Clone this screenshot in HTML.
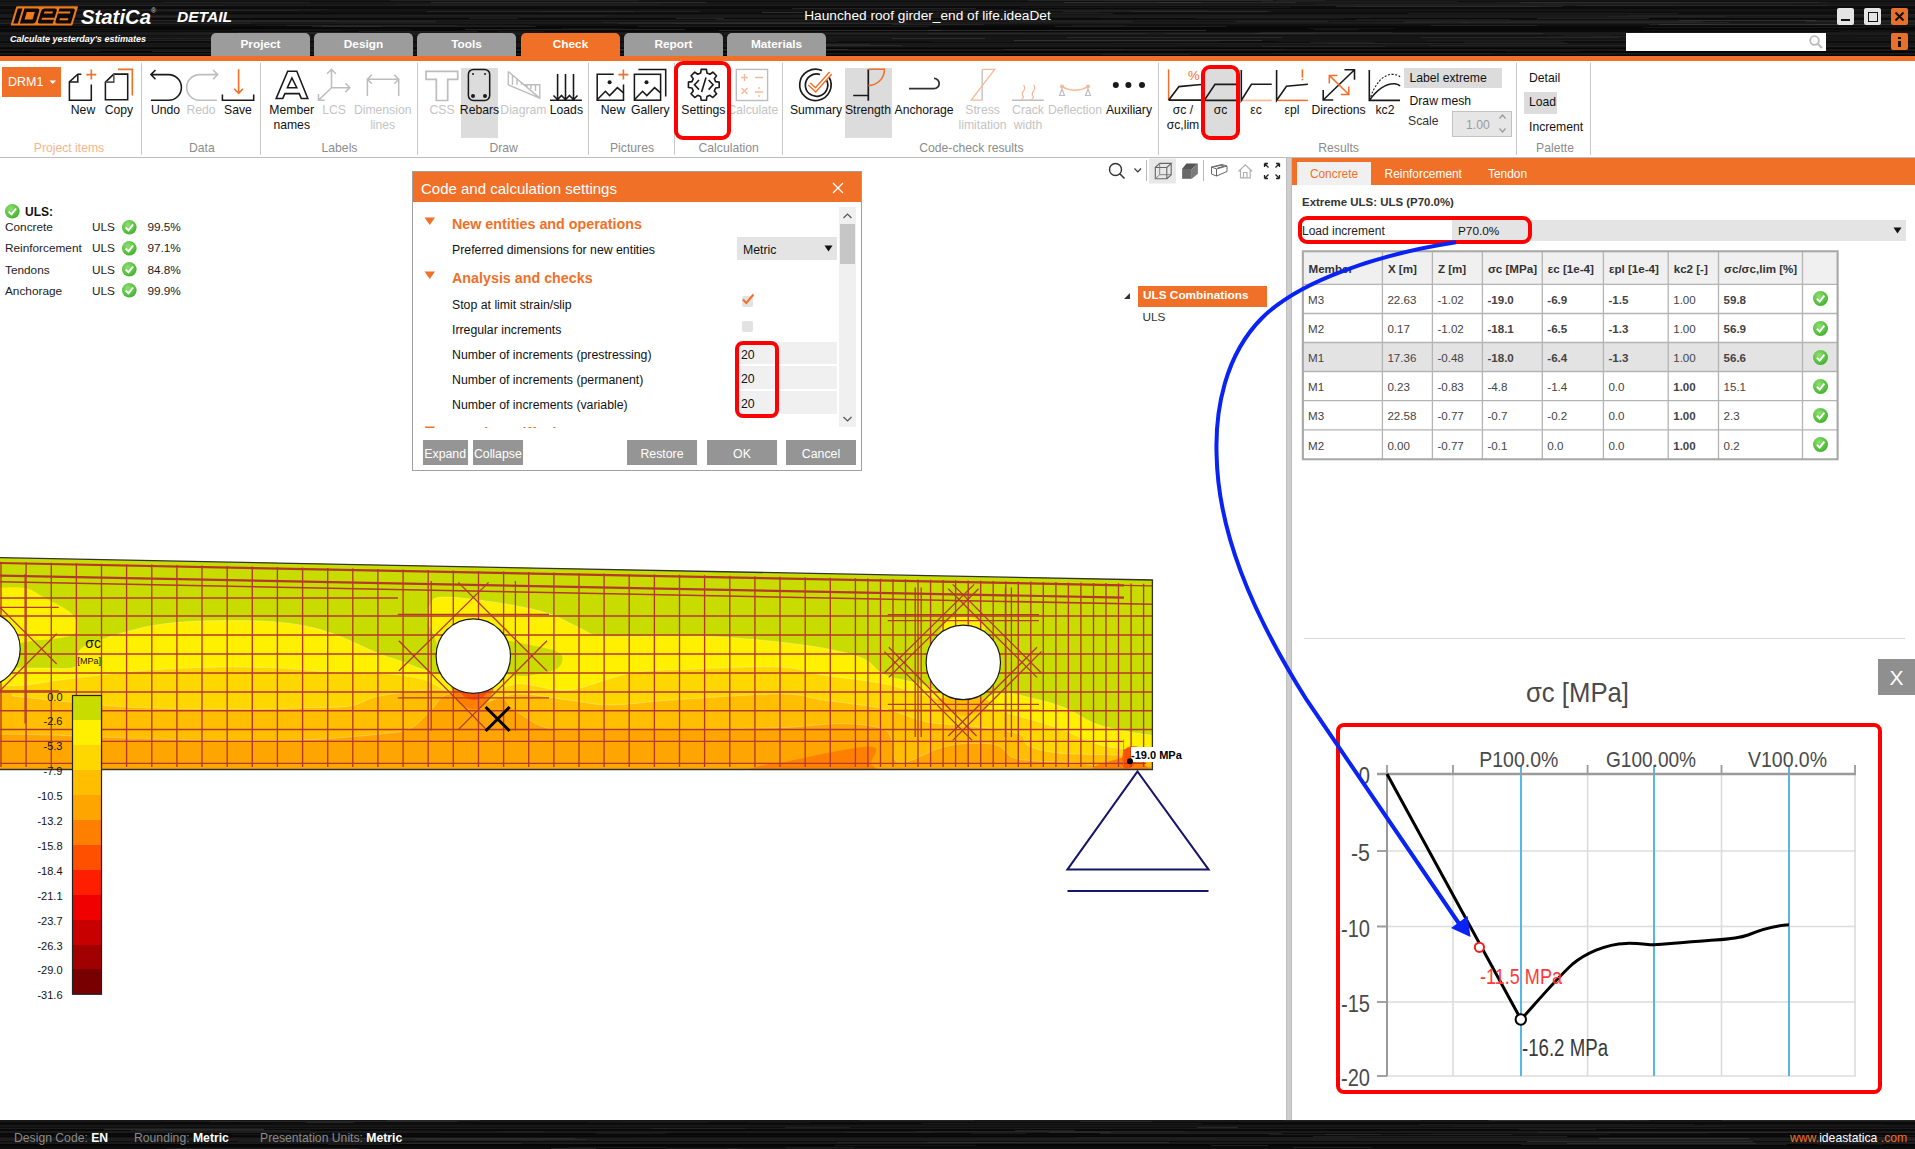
<!DOCTYPE html>
<html><head><meta charset="utf-8"><style>
*{box-sizing:border-box}
html,body{margin:0;padding:0;width:1915px;height:1149px;overflow:hidden;background:#fff;font-family:"Liberation Sans", sans-serif;}
.a{position:absolute}
.t{position:absolute;white-space:nowrap;line-height:1}
</style></head><body>
<div class="a" style="left:0;top:0;width:1915px;height:56px;overflow:hidden"><svg width="1915" height="56" style="position:absolute;left:0;top:0"><rect width="1915" height="56" fill="#0a0a0a"/><rect x="0" y="0" width="1915" height="1" fill="rgb(22,22,22)"/><rect x="0" y="1" width="1915" height="1" fill="rgb(15,15,15)"/><rect x="0" y="2" width="1915" height="2" fill="rgb(24,24,24)"/><rect x="0" y="4" width="1915" height="1" fill="rgb(23,23,23)"/><rect x="0" y="5" width="1915" height="1" fill="rgb(30,30,30)"/><rect x="0" y="6" width="1915" height="2" fill="rgb(12,12,12)"/><rect x="0" y="8" width="1915" height="1" fill="rgb(10,10,10)"/><rect x="0" y="9" width="1915" height="2" fill="rgb(21,21,21)"/><rect x="0" y="11" width="1915" height="2" fill="rgb(16,16,16)"/><rect x="0" y="13" width="1915" height="1" fill="rgb(11,11,11)"/><rect x="0" y="14" width="1915" height="1" fill="rgb(20,20,20)"/><rect x="0" y="15" width="1915" height="2" fill="rgb(27,27,27)"/><rect x="0" y="17" width="1915" height="1" fill="rgb(25,25,25)"/><rect x="0" y="18" width="1915" height="1" fill="rgb(9,9,9)"/><rect x="0" y="19" width="1915" height="1" fill="rgb(13,13,13)"/><rect x="0" y="20" width="1915" height="1" fill="rgb(30,30,30)"/><rect x="0" y="21" width="1915" height="1" fill="rgb(19,19,19)"/><rect x="0" y="22" width="1915" height="2" fill="rgb(26,26,26)"/><rect x="0" y="24" width="1915" height="2" fill="rgb(16,16,16)"/><rect x="0" y="26" width="1915" height="2" fill="rgb(8,8,8)"/><rect x="0" y="28" width="1915" height="1" fill="rgb(7,7,7)"/><rect x="0" y="29" width="1915" height="1" fill="rgb(8,8,8)"/><rect x="0" y="30" width="1915" height="2" fill="rgb(10,10,10)"/><rect x="0" y="32" width="1915" height="1" fill="rgb(25,25,25)"/><rect x="0" y="33" width="1915" height="2" fill="rgb(28,28,28)"/><rect x="0" y="35" width="1915" height="1" fill="rgb(17,17,17)"/><rect x="0" y="36" width="1915" height="2" fill="rgb(22,22,22)"/><rect x="0" y="38" width="1915" height="1" fill="rgb(21,21,21)"/><rect x="0" y="39" width="1915" height="2" fill="rgb(22,22,22)"/><rect x="0" y="41" width="1915" height="1" fill="rgb(14,14,14)"/><rect x="0" y="42" width="1915" height="1" fill="rgb(12,12,12)"/><rect x="0" y="43" width="1915" height="1" fill="rgb(26,26,26)"/><rect x="0" y="44" width="1915" height="1" fill="rgb(21,21,21)"/><rect x="0" y="45" width="1915" height="1" fill="rgb(26,26,26)"/><rect x="0" y="46" width="1915" height="1" fill="rgb(24,24,24)"/><rect x="0" y="47" width="1915" height="1" fill="rgb(13,13,13)"/><rect x="0" y="48" width="1915" height="1" fill="rgb(6,6,6)"/><rect x="0" y="49" width="1915" height="2" fill="rgb(24,24,24)"/><rect x="0" y="51" width="1915" height="2" fill="rgb(6,6,6)"/><rect x="0" y="53" width="1915" height="1" fill="rgb(29,29,29)"/><rect x="0" y="54" width="1915" height="1" fill="rgb(17,17,17)"/><rect x="0" y="55" width="1915" height="1" fill="rgb(4,4,4)"/><rect x="527" y="49" width="148" height="1" fill="rgb(37,37,37)" opacity="0.27"/><rect x="1158" y="2" width="138" height="1" fill="rgb(67,67,67)" opacity="0.37"/><rect x="1681" y="17" width="171" height="1" fill="rgb(32,32,32)" opacity="0.36"/><rect x="101" y="38" width="179" height="1" fill="rgb(42,42,42)" opacity="0.59"/><rect x="523" y="16" width="81" height="1" fill="rgb(32,32,32)" opacity="0.59"/><rect x="618" y="23" width="289" height="1" fill="rgb(54,54,54)" opacity="0.38"/><rect x="1659" y="24" width="207" height="1" fill="rgb(68,68,68)" opacity="0.49"/><rect x="152" y="51" width="172" height="1" fill="rgb(57,57,57)" opacity="0.47"/><rect x="1356" y="19" width="154" height="1" fill="rgb(46,46,46)" opacity="0.43"/><rect x="1028" y="0" width="245" height="1" fill="rgb(67,67,67)" opacity="0.36"/><rect x="690" y="37" width="204" height="1" fill="rgb(33,33,33)" opacity="0.47"/><rect x="603" y="22" width="217" height="1" fill="rgb(52,52,52)" opacity="0.46"/><rect x="498" y="31" width="46" height="1" fill="rgb(33,33,33)" opacity="0.58"/><rect x="-8" y="23" width="105" height="1" fill="rgb(59,59,59)" opacity="0.35"/><rect x="1132" y="11" width="135" height="1" fill="rgb(50,50,50)" opacity="0.52"/><rect x="1608" y="16" width="118" height="1" fill="rgb(54,54,54)" opacity="0.29"/><rect x="1548" y="36" width="218" height="1" fill="rgb(38,38,38)" opacity="0.36"/><rect x="387" y="51" width="110" height="1" fill="rgb(50,50,50)" opacity="0.32"/><rect x="805" y="44" width="65" height="1" fill="rgb(68,68,68)" opacity="0.36"/><rect x="606" y="53" width="98" height="1" fill="rgb(40,40,40)" opacity="0.28"/><rect x="1408" y="13" width="270" height="1" fill="rgb(58,58,58)" opacity="0.34"/><rect x="1496" y="2" width="178" height="1" fill="rgb(42,42,42)" opacity="0.36"/><rect x="1593" y="36" width="88" height="1" fill="rgb(47,47,47)" opacity="0.37"/><rect x="1577" y="5" width="250" height="1" fill="rgb(52,52,52)" opacity="0.46"/><rect x="778" y="33" width="246" height="1" fill="rgb(47,47,47)" opacity="0.41"/><rect x="1196" y="18" width="149" height="1" fill="rgb(56,56,56)" opacity="0.26"/><rect x="762" y="12" width="41" height="1" fill="rgb(69,69,69)" opacity="0.60"/><rect x="804" y="45" width="98" height="1" fill="rgb(59,59,59)" opacity="0.54"/><rect x="1253" y="33" width="290" height="1" fill="rgb(64,64,64)" opacity="0.37"/><rect x="397" y="4" width="263" height="1" fill="rgb(48,48,48)" opacity="0.29"/><rect x="431" y="2" width="275" height="1" fill="rgb(62,62,62)" opacity="0.57"/><rect x="1712" y="27" width="190" height="1" fill="rgb(30,30,30)" opacity="0.42"/><rect x="187" y="32" width="118" height="1" fill="rgb(31,31,31)" opacity="0.43"/><rect x="763" y="39" width="70" height="1" fill="rgb(38,38,38)" opacity="0.34"/><rect x="1643" y="30" width="251" height="1" fill="rgb(33,33,33)" opacity="0.37"/><rect x="338" y="34" width="271" height="1" fill="rgb(37,37,37)" opacity="0.31"/><rect x="1506" y="51" width="73" height="1" fill="rgb(30,30,30)" opacity="0.42"/><rect x="1072" y="25" width="53" height="1" fill="rgb(47,47,47)" opacity="0.34"/><rect x="1165" y="33" width="150" height="1" fill="rgb(60,60,60)" opacity="0.36"/><rect x="1560" y="54" width="54" height="1" fill="rgb(38,38,38)" opacity="0.27"/><rect x="48" y="30" width="293" height="1" fill="rgb(35,35,35)" opacity="0.43"/><rect x="913" y="10" width="122" height="1" fill="rgb(52,52,52)" opacity="0.39"/><rect x="716" y="19" width="134" height="1" fill="rgb(42,42,42)" opacity="0.60"/><rect x="792" y="8" width="184" height="1" fill="rgb(54,54,54)" opacity="0.53"/><rect x="1064" y="2" width="137" height="1" fill="rgb(68,68,68)" opacity="0.48"/><rect x="1014" y="40" width="248" height="1" fill="rgb(69,69,69)" opacity="0.56"/><rect x="54" y="40" width="169" height="1" fill="rgb(50,50,50)" opacity="0.40"/><rect x="1314" y="29" width="45" height="1" fill="rgb(43,43,43)" opacity="0.44"/><rect x="1316" y="4" width="249" height="1" fill="rgb(44,44,44)" opacity="0.40"/><rect x="1679" y="20" width="137" height="1" fill="rgb(65,65,65)" opacity="0.53"/><rect x="465" y="29" width="220" height="1" fill="rgb(63,63,63)" opacity="0.53"/><rect x="1262" y="46" width="123" height="1" fill="rgb(64,64,64)" opacity="0.29"/><rect x="1105" y="0" width="163" height="1" fill="rgb(45,45,45)" opacity="0.52"/><rect x="37" y="5" width="187" height="1" fill="rgb(54,54,54)" opacity="0.31"/><rect x="-4" y="53" width="262" height="1" fill="rgb(31,31,31)" opacity="0.55"/><rect x="1273" y="53" width="221" height="1" fill="rgb(48,48,48)" opacity="0.45"/><rect x="1520" y="2" width="299" height="1" fill="rgb(66,66,66)" opacity="0.43"/><rect x="1355" y="6" width="184" height="1" fill="rgb(36,36,36)" opacity="0.58"/><rect x="70" y="20" width="266" height="1" fill="rgb(41,41,41)" opacity="0.54"/><rect x="426" y="11" width="208" height="1" fill="rgb(59,59,59)" opacity="0.47"/><rect x="1431" y="25" width="106" height="1" fill="rgb(68,68,68)" opacity="0.39"/><rect x="638" y="26" width="291" height="1" fill="rgb(54,54,54)" opacity="0.43"/><rect x="1862" y="26" width="259" height="1" fill="rgb(40,40,40)" opacity="0.40"/><rect x="1067" y="37" width="215" height="1" fill="rgb(63,63,63)" opacity="0.49"/><rect x="257" y="25" width="273" height="1" fill="rgb(39,39,39)" opacity="0.31"/><rect x="928" y="30" width="278" height="1" fill="rgb(63,63,63)" opacity="0.58"/><rect x="1102" y="54" width="88" height="1" fill="rgb(47,47,47)" opacity="0.51"/><rect x="238" y="32" width="122" height="1" fill="rgb(44,44,44)" opacity="0.55"/><rect x="1007" y="49" width="117" height="1" fill="rgb(56,56,56)" opacity="0.46"/><rect x="1099" y="17" width="271" height="1" fill="rgb(49,49,49)" opacity="0.26"/><rect x="892" y="24" width="92" height="1" fill="rgb(66,66,66)" opacity="0.38"/><rect x="583" y="49" width="265" height="1" fill="rgb(56,56,56)" opacity="0.60"/><rect x="892" y="38" width="93" height="1" fill="rgb(67,67,67)" opacity="0.54"/><rect x="1564" y="35" width="47" height="1" fill="rgb(34,34,34)" opacity="0.55"/><rect x="737" y="46" width="269" height="1" fill="rgb(32,32,32)" opacity="0.41"/><rect x="401" y="15" width="209" height="1" fill="rgb(34,34,34)" opacity="0.59"/><rect x="1628" y="15" width="271" height="1" fill="rgb(46,46,46)" opacity="0.30"/><rect x="1172" y="43" width="263" height="1" fill="rgb(46,46,46)" opacity="0.31"/><rect x="38" y="11" width="150" height="1" fill="rgb(35,35,35)" opacity="0.29"/><rect x="469" y="18" width="49" height="1" fill="rgb(58,58,58)" opacity="0.45"/><rect x="1277" y="0" width="48" height="1" fill="rgb(51,51,51)" opacity="0.40"/><rect x="905" y="13" width="208" height="1" fill="rgb(61,61,61)" opacity="0.39"/><rect x="1020" y="7" width="270" height="1" fill="rgb(34,34,34)" opacity="0.48"/><rect x="171" y="33" width="276" height="1" fill="rgb(36,36,36)" opacity="0.43"/><rect x="1327" y="43" width="241" height="1" fill="rgb(58,58,58)" opacity="0.35"/><rect x="1278" y="41" width="285" height="1" fill="rgb(46,46,46)" opacity="0.29"/><rect x="1806" y="21" width="215" height="1" fill="rgb(64,64,64)" opacity="0.43"/><rect x="1260" y="32" width="132" height="1" fill="rgb(48,48,48)" opacity="0.49"/><rect x="1063" y="11" width="208" height="1" fill="rgb(70,70,70)" opacity="0.30"/><rect x="679" y="41" width="158" height="1" fill="rgb(36,36,36)" opacity="0.58"/><rect x="228" y="21" width="208" height="1" fill="rgb(68,68,68)" opacity="0.40"/><rect x="541" y="11" width="159" height="1" fill="rgb(49,49,49)" opacity="0.52"/><rect x="1336" y="6" width="226" height="1" fill="rgb(65,65,65)" opacity="0.44"/><rect x="1403" y="22" width="66" height="1" fill="rgb(47,47,47)" opacity="0.38"/><rect x="1665" y="2" width="164" height="1" fill="rgb(47,47,47)" opacity="0.34"/><rect x="1461" y="22" width="268" height="1" fill="rgb(55,55,55)" opacity="0.41"/><rect x="1540" y="4" width="132" height="1" fill="rgb(37,37,37)" opacity="0.30"/><rect x="1110" y="43" width="69" height="1" fill="rgb(37,37,37)" opacity="0.31"/><rect x="322" y="26" width="214" height="1" fill="rgb(55,55,55)" opacity="0.54"/><rect x="1421" y="37" width="198" height="1" fill="rgb(55,55,55)" opacity="0.53"/><rect x="1020" y="10" width="188" height="1" fill="rgb(42,42,42)" opacity="0.55"/><rect x="676" y="18" width="48" height="1" fill="rgb(58,58,58)" opacity="0.56"/><rect x="1815" y="24" width="122" height="1" fill="rgb(67,67,67)" opacity="0.36"/><rect x="928" y="33" width="219" height="1" fill="rgb(49,49,49)" opacity="0.56"/><rect x="1262" y="1" width="196" height="1" fill="rgb(70,70,70)" opacity="0.25"/><rect x="1464" y="42" width="101" height="1" fill="rgb(41,41,41)" opacity="0.43"/><rect x="855" y="12" width="243" height="1" fill="rgb(43,43,43)" opacity="0.26"/><rect x="933" y="41" width="286" height="1" fill="rgb(37,37,37)" opacity="0.45"/><rect x="1834" y="9" width="75" height="1" fill="rgb(35,35,35)" opacity="0.47"/><rect x="49" y="23" width="201" height="1" fill="rgb(62,62,62)" opacity="0.28"/><rect x="1009" y="21" width="124" height="1" fill="rgb(52,52,52)" opacity="0.49"/><rect x="214" y="54" width="258" height="1" fill="rgb(32,32,32)" opacity="0.50"/><rect x="1404" y="21" width="299" height="1" fill="rgb(43,43,43)" opacity="0.58"/><rect x="1643" y="27" width="222" height="1" fill="rgb(44,44,44)" opacity="0.42"/><rect x="164" y="2" width="146" height="1" fill="rgb(42,42,42)" opacity="0.50"/><rect x="719" y="30" width="222" height="1" fill="rgb(64,64,64)" opacity="0.55"/><rect x="359" y="31" width="119" height="1" fill="rgb(59,59,59)" opacity="0.41"/><rect x="1308" y="28" width="87" height="1" fill="rgb(32,32,32)" opacity="0.50"/><rect x="671" y="23" width="156" height="1" fill="rgb(53,53,53)" opacity="0.46"/><rect x="390" y="0" width="249" height="1" fill="rgb(46,46,46)" opacity="0.52"/><rect x="232" y="29" width="179" height="1" fill="rgb(40,40,40)" opacity="0.32"/><rect x="286" y="25" width="171" height="1" fill="rgb(70,70,70)" opacity="0.26"/><rect x="166" y="10" width="155" height="1" fill="rgb(41,41,41)" opacity="0.27"/><rect x="-6" y="28" width="123" height="1" fill="rgb(32,32,32)" opacity="0.50"/><rect x="50" y="25" width="50" height="1" fill="rgb(61,61,61)" opacity="0.26"/><rect x="1847" y="14" width="103" height="1" fill="rgb(54,54,54)" opacity="0.42"/><rect x="274" y="39" width="70" height="1" fill="rgb(37,37,37)" opacity="0.46"/><rect x="1537" y="18" width="112" height="1" fill="rgb(59,59,59)" opacity="0.53"/><rect x="1840" y="31" width="105" height="1" fill="rgb(47,47,47)" opacity="0.26"/><rect x="612" y="22" width="122" height="1" fill="rgb(33,33,33)" opacity="0.49"/><rect x="1855" y="37" width="201" height="1" fill="rgb(36,36,36)" opacity="0.26"/><rect x="128" y="10" width="171" height="1" fill="rgb(60,60,60)" opacity="0.27"/><rect x="1236" y="21" width="92" height="1" fill="rgb(60,60,60)" opacity="0.37"/><rect x="891" y="22" width="284" height="1" fill="rgb(32,32,32)" opacity="0.38"/><rect x="1427" y="40" width="286" height="1" fill="rgb(35,35,35)" opacity="0.58"/><rect x="312" y="26" width="70" height="1" fill="rgb(54,54,54)" opacity="0.44"/><rect x="1004" y="49" width="281" height="1" fill="rgb(41,41,41)" opacity="0.54"/><rect x="1649" y="24" width="257" height="1" fill="rgb(65,65,65)" opacity="0.38"/><rect x="311" y="51" width="148" height="1" fill="rgb(44,44,44)" opacity="0.41"/><rect x="1331" y="22" width="110" height="1" fill="rgb(40,40,40)" opacity="0.43"/><rect x="1429" y="45" width="221" height="1" fill="rgb(61,61,61)" opacity="0.26"/><rect x="287" y="48" width="46" height="1" fill="rgb(59,59,59)" opacity="0.28"/><rect x="1310" y="42" width="65" height="1" fill="rgb(45,45,45)" opacity="0.46"/><rect x="1525" y="3" width="268" height="1" fill="rgb(33,33,33)" opacity="0.41"/><rect x="1712" y="46" width="208" height="1" fill="rgb(53,53,53)" opacity="0.25"/><rect x="333" y="50" width="288" height="1" fill="rgb(36,36,36)" opacity="0.37"/><rect x="562" y="28" width="61" height="1" fill="rgb(43,43,43)" opacity="0.33"/><rect x="46" y="9" width="283" height="1" fill="rgb(39,39,39)" opacity="0.45"/><rect x="-27" y="14" width="115" height="1" fill="rgb(43,43,43)" opacity="0.33"/><rect x="1055" y="26" width="171" height="1" fill="rgb(68,68,68)" opacity="0.36"/><rect x="1685" y="50" width="89" height="1" fill="rgb(41,41,41)" opacity="0.47"/><rect x="31" y="51" width="69" height="1" fill="rgb(31,31,31)" opacity="0.55"/><rect x="149" y="16" width="62" height="1" fill="rgb(59,59,59)" opacity="0.39"/></svg></div>
<svg class="a" style="left:0;top:0" width="260" height="50">
<g transform="skewX(-17)">
<rect x="18.3" y="6.2" width="61.8" height="19.2" rx="1" fill="#f07a1a"/>
<rect x="20.4" y="8.4" width="4.6" height="15" fill="#0b0b0b"/>
<path d="M27 8.4H40A2.5 2.5 0 0 1 42.5 10.9V20.9A2.5 2.5 0 0 1 40 23.4H27Z" fill="#0b0b0b"/>
<rect x="30.5" y="12" width="8" height="7.5" fill="#f07a1a"/>
<path d="M47 8.4H57.5A2.5 2.5 0 0 1 60 10.9V17.8H47.5V19.8H60V23.4H47A2.5 2.5 0 0 1 44.5 20.9V10.9A2.5 2.5 0 0 1 47 8.4Z" fill="#0b0b0b"/>
<rect x="48" y="11.6" width="8.5" height="1.9" fill="#f07a1a"/>
<path d="M62 8.4H75.5A2.5 2.5 0 0 1 78 10.9V23.4H64.5A2.5 2.5 0 0 1 62 20.9Z" fill="#0b0b0b"/>
<rect x="62" y="11.6" width="12" height="1.9" fill="#f07a1a"/>
<rect x="65.5" y="18.3" width="8.5" height="1.9" fill="#f07a1a"/>
</g>
<text x="81" y="23.5" font-family="Liberation Sans" font-weight="bold" font-style="italic" font-size="19.5" fill="#fff" textLength="70" lengthAdjust="spacingAndGlyphs">StatiCa</text>
<text x="151" y="13" font-family="Liberation Sans" font-size="7" fill="#ccc">®</text>
<text x="177" y="22" font-family="Liberation Sans" font-weight="bold" font-style="italic" font-size="15.5" fill="#fff" textLength="55" lengthAdjust="spacingAndGlyphs">DETAIL</text>
<text x="10" y="42" font-family="Liberation Sans" font-weight="bold" font-style="italic" font-size="9" fill="#fff" textLength="136" lengthAdjust="spacingAndGlyphs">Calculate yesterday's estimates</text>
</svg>
<div class="t" style="left:804px;top:9px;font-size:13.7px;color:#fff;width:247px;text-align:center">Haunched roof girder_end of life.ideaDet</div>
<div class="a" style="left:211px;top:33px;width:99px;height:24px;background:#9c9c9c;border-radius:5px 5px 0 0"></div>
<div class="t" style="left:211px;top:39.2px;width:99px;text-align:center;font-size:11.8px;font-weight:bold;color:#fff">Project</div>
<div class="a" style="left:314px;top:33px;width:99px;height:24px;background:#9c9c9c;border-radius:5px 5px 0 0"></div>
<div class="t" style="left:314px;top:39.2px;width:99px;text-align:center;font-size:11.8px;font-weight:bold;color:#fff">Design</div>
<div class="a" style="left:417px;top:33px;width:99px;height:24px;background:#9c9c9c;border-radius:5px 5px 0 0"></div>
<div class="t" style="left:417px;top:39.2px;width:99px;text-align:center;font-size:11.8px;font-weight:bold;color:#fff">Tools</div>
<div class="a" style="left:521px;top:33px;width:99px;height:24px;background:#f07028;border-radius:5px 5px 0 0"></div>
<div class="t" style="left:521px;top:39.2px;width:99px;text-align:center;font-size:11.8px;font-weight:bold;color:#fff">Check</div>
<div class="a" style="left:624px;top:33px;width:99px;height:24px;background:#9c9c9c;border-radius:5px 5px 0 0"></div>
<div class="t" style="left:624px;top:39.2px;width:99px;text-align:center;font-size:11.8px;font-weight:bold;color:#fff">Report</div>
<div class="a" style="left:727px;top:33px;width:99px;height:24px;background:#9c9c9c;border-radius:5px 5px 0 0"></div>
<div class="t" style="left:727px;top:39.2px;width:99px;text-align:center;font-size:11.8px;font-weight:bold;color:#fff">Materials</div>
<div class="a" style="left:0;top:56px;width:1915px;height:5px;background:#f07028"></div>
<div class="a" style="left:1837px;top:8px;width:17px;height:17px;background:#e4e4e4;border-radius:2px"><div class="a" style="left:4px;top:11px;width:9px;height:2px;background:#111"></div></div>
<div class="a" style="left:1864px;top:8px;width:17px;height:17px;background:#e4e4e4;border-radius:2px"><div class="a" style="left:3.5px;top:3.5px;width:10px;height:10px;border:1.8px solid #111"></div></div>
<div class="a" style="left:1891px;top:8px;width:17px;height:17px;background:#e8702a;border-radius:2px"><svg class="a" style="left:0;top:0" width="17" height="17"><path d="M4.5 4.5L12.5 12.5M12.5 4.5L4.5 12.5" stroke="#111" stroke-width="2"/></svg></div>
<div class="a" style="left:1626px;top:33px;width:200px;height:18px;background:#fff"><svg class="a" style="left:182px;top:1px" width="16" height="16"><circle cx="6.5" cy="6.5" r="4.3" fill="none" stroke="#bbb" stroke-width="1.8"/><path d="M9.5 9.5L14 14" stroke="#bbb" stroke-width="2"/></svg></div>
<div class="a" style="left:1891px;top:33px;width:17px;height:17px;background:#e8702a;border-radius:2px"><div class="a" style="left:7px;top:4px;width:3px;height:2px;background:#111"></div><div class="a" style="left:7px;top:7.5px;width:3px;height:6px;background:#111"></div></div>
<div class="a" style="left:0;top:157px;width:1915px;height:1px;background:#bdbdbd"></div>
<div class="a" style="left:0;top:1120px;width:1915px;height:29px;overflow:hidden"><svg width="1915" height="29" style="position:absolute;left:0;top:0"><rect width="1915" height="29" fill="#0a0a0a"/><rect x="0" y="0" width="1915" height="2" fill="rgb(23,23,23)"/><rect x="0" y="2" width="1915" height="1" fill="rgb(12,12,12)"/><rect x="0" y="3" width="1915" height="1" fill="rgb(9,9,9)"/><rect x="0" y="4" width="1915" height="1" fill="rgb(14,14,14)"/><rect x="0" y="5" width="1915" height="2" fill="rgb(23,23,23)"/><rect x="0" y="7" width="1915" height="1" fill="rgb(14,14,14)"/><rect x="0" y="8" width="1915" height="1" fill="rgb(27,27,27)"/><rect x="0" y="9" width="1915" height="2" fill="rgb(9,9,9)"/><rect x="0" y="11" width="1915" height="2" fill="rgb(27,27,27)"/><rect x="0" y="13" width="1915" height="2" fill="rgb(9,9,9)"/><rect x="0" y="15" width="1915" height="1" fill="rgb(11,11,11)"/><rect x="0" y="16" width="1915" height="1" fill="rgb(7,7,7)"/><rect x="0" y="17" width="1915" height="1" fill="rgb(20,20,20)"/><rect x="0" y="18" width="1915" height="1" fill="rgb(28,28,28)"/><rect x="0" y="19" width="1915" height="2" fill="rgb(29,29,29)"/><rect x="0" y="21" width="1915" height="1" fill="rgb(13,13,13)"/><rect x="0" y="22" width="1915" height="1" fill="rgb(25,25,25)"/><rect x="0" y="23" width="1915" height="1" fill="rgb(27,27,27)"/><rect x="0" y="24" width="1915" height="2" fill="rgb(6,6,6)"/><rect x="0" y="26" width="1915" height="1" fill="rgb(10,10,10)"/><rect x="0" y="27" width="1915" height="2" fill="rgb(12,12,12)"/><rect x="621" y="1" width="92" height="1" fill="rgb(30,30,30)" opacity="0.56"/><rect x="58" y="12" width="260" height="1" fill="rgb(38,38,38)" opacity="0.26"/><rect x="785" y="27" width="69" height="1" fill="rgb(68,68,68)" opacity="0.25"/><rect x="1452" y="6" width="273" height="1" fill="rgb(42,42,42)" opacity="0.37"/><rect x="1704" y="4" width="180" height="1" fill="rgb(31,31,31)" opacity="0.43"/><rect x="1076" y="17" width="279" height="1" fill="rgb(56,56,56)" opacity="0.27"/><rect x="328" y="24" width="64" height="1" fill="rgb(67,67,67)" opacity="0.30"/><rect x="1797" y="23" width="289" height="1" fill="rgb(33,33,33)" opacity="0.34"/><rect x="1293" y="27" width="79" height="1" fill="rgb(47,47,47)" opacity="0.51"/><rect x="1080" y="1" width="72" height="1" fill="rgb(55,55,55)" opacity="0.58"/><rect x="415" y="19" width="171" height="1" fill="rgb(53,53,53)" opacity="0.55"/><rect x="976" y="18" width="241" height="1" fill="rgb(35,35,35)" opacity="0.55"/><rect x="166" y="28" width="192" height="1" fill="rgb(58,58,58)" opacity="0.32"/><rect x="341" y="18" width="234" height="1" fill="rgb(54,54,54)" opacity="0.53"/><rect x="596" y="13" width="69" height="1" fill="rgb(44,44,44)" opacity="0.41"/><rect x="588" y="2" width="120" height="1" fill="rgb(48,48,48)" opacity="0.29"/><rect x="1491" y="0" width="139" height="1" fill="rgb(65,65,65)" opacity="0.53"/><rect x="927" y="22" width="242" height="1" fill="rgb(66,66,66)" opacity="0.51"/><rect x="785" y="7" width="65" height="1" fill="rgb(55,55,55)" opacity="0.43"/><rect x="1828" y="17" width="136" height="1" fill="rgb(48,48,48)" opacity="0.31"/><rect x="1607" y="8" width="48" height="1" fill="rgb(41,41,41)" opacity="0.34"/><rect x="273" y="3" width="198" height="1" fill="rgb(30,30,30)" opacity="0.27"/><rect x="835" y="25" width="141" height="1" fill="rgb(69,69,69)" opacity="0.26"/><rect x="1519" y="9" width="77" height="1" fill="rgb(65,65,65)" opacity="0.35"/><rect x="1840" y="23" width="185" height="1" fill="rgb(37,37,37)" opacity="0.27"/><rect x="837" y="22" width="186" height="1" fill="rgb(54,54,54)" opacity="0.46"/><rect x="1527" y="21" width="226" height="1" fill="rgb(68,68,68)" opacity="0.56"/><rect x="922" y="3" width="280" height="1" fill="rgb(47,47,47)" opacity="0.44"/><rect x="291" y="20" width="253" height="1" fill="rgb(40,40,40)" opacity="0.52"/><rect x="387" y="0" width="93" height="1" fill="rgb(60,60,60)" opacity="0.41"/><rect x="1049" y="12" width="62" height="1" fill="rgb(65,65,65)" opacity="0.42"/><rect x="1810" y="17" width="57" height="1" fill="rgb(31,31,31)" opacity="0.45"/><rect x="1100" y="13" width="182" height="1" fill="rgb(63,63,63)" opacity="0.43"/><rect x="1211" y="25" width="57" height="1" fill="rgb(66,66,66)" opacity="0.44"/><rect x="540" y="23" width="98" height="1" fill="rgb(38,38,38)" opacity="0.29"/><rect x="1325" y="14" width="56" height="1" fill="rgb(70,70,70)" opacity="0.50"/><rect x="1284" y="0" width="137" height="1" fill="rgb(59,59,59)" opacity="0.33"/><rect x="1567" y="23" width="189" height="1" fill="rgb(61,61,61)" opacity="0.56"/><rect x="21" y="19" width="62" height="1" fill="rgb(33,33,33)" opacity="0.49"/><rect x="749" y="2" width="61" height="1" fill="rgb(32,32,32)" opacity="0.46"/><rect x="306" y="2" width="48" height="1" fill="rgb(69,69,69)" opacity="0.41"/><rect x="1002" y="0" width="223" height="1" fill="rgb(34,34,34)" opacity="0.37"/><rect x="1488" y="0" width="161" height="1" fill="rgb(58,58,58)" opacity="0.46"/><rect x="1869" y="15" width="257" height="1" fill="rgb(36,36,36)" opacity="0.56"/><rect x="1269" y="14" width="243" height="1" fill="rgb(42,42,42)" opacity="0.59"/><rect x="164" y="1" width="71" height="1" fill="rgb(35,35,35)" opacity="0.38"/><rect x="1406" y="14" width="203" height="1" fill="rgb(42,42,42)" opacity="0.38"/><rect x="1197" y="7" width="41" height="1" fill="rgb(63,63,63)" opacity="0.49"/><rect x="-20" y="8" width="285" height="1" fill="rgb(31,31,31)" opacity="0.59"/><rect x="971" y="13" width="55" height="1" fill="rgb(46,46,46)" opacity="0.42"/><rect x="569" y="27" width="97" height="1" fill="rgb(33,33,33)" opacity="0.49"/><rect x="210" y="1" width="248" height="1" fill="rgb(52,52,52)" opacity="0.53"/><rect x="1722" y="0" width="268" height="1" fill="rgb(49,49,49)" opacity="0.59"/><rect x="136" y="10" width="154" height="1" fill="rgb(56,56,56)" opacity="0.46"/><rect x="916" y="11" width="269" height="1" fill="rgb(55,55,55)" opacity="0.40"/><rect x="104" y="9" width="160" height="1" fill="rgb(69,69,69)" opacity="0.57"/><rect x="846" y="12" width="88" height="1" fill="rgb(55,55,55)" opacity="0.27"/><rect x="130" y="10" width="181" height="1" fill="rgb(42,42,42)" opacity="0.32"/><rect x="666" y="28" width="76" height="1" fill="rgb(70,70,70)" opacity="0.28"/><rect x="1866" y="19" width="196" height="1" fill="rgb(54,54,54)" opacity="0.32"/><rect x="1015" y="10" width="60" height="1" fill="rgb(65,65,65)" opacity="0.40"/><rect x="397" y="23" width="124" height="1" fill="rgb(62,62,62)" opacity="0.43"/><rect x="860" y="0" width="114" height="1" fill="rgb(64,64,64)" opacity="0.32"/><rect x="390" y="10" width="51" height="1" fill="rgb(39,39,39)" opacity="0.36"/><rect x="1313" y="16" width="254" height="1" fill="rgb(55,55,55)" opacity="0.48"/><rect x="727" y="28" width="193" height="1" fill="rgb(38,38,38)" opacity="0.43"/><rect x="652" y="8" width="93" height="1" fill="rgb(54,54,54)" opacity="0.45"/><rect x="1521" y="24" width="266" height="1" fill="rgb(66,66,66)" opacity="0.31"/><rect x="551" y="28" width="45" height="1" fill="rgb(60,60,60)" opacity="0.43"/><rect x="1432" y="13" width="276" height="1" fill="rgb(35,35,35)" opacity="0.35"/><rect x="232" y="14" width="164" height="1" fill="rgb(44,44,44)" opacity="0.31"/><rect x="238" y="21" width="130" height="1" fill="rgb(68,68,68)" opacity="0.27"/><rect x="497" y="11" width="47" height="1" fill="rgb(41,41,41)" opacity="0.44"/><rect x="1818" y="24" width="65" height="1" fill="rgb(38,38,38)" opacity="0.37"/><rect x="1419" y="4" width="275" height="1" fill="rgb(43,43,43)" opacity="0.43"/><rect x="1599" y="18" width="150" height="1" fill="rgb(65,65,65)" opacity="0.60"/><rect x="1790" y="22" width="132" height="1" fill="rgb(53,53,53)" opacity="0.27"/><rect x="1538" y="12" width="271" height="1" fill="rgb(57,57,57)" opacity="0.47"/><rect x="1844" y="17" width="66" height="1" fill="rgb(40,40,40)" opacity="0.59"/></svg></div>
<div class="t" style="left:14px;top:1132px;font-size:12.2px;color:#8a8a8a">Design Code: <b style="color:#fff">EN</b></div>
<div class="t" style="left:134px;top:1132px;font-size:12.2px;color:#8a8a8a">Rounding: <b style="color:#fff">Metric</b></div>
<div class="t" style="left:260px;top:1132px;font-size:12.2px;color:#8a8a8a">Presentation Units: <b style="color:#fff">Metric</b></div>
<div class="t" style="left:1790px;top:1132px;font-size:12.2px;color:#fff"><span style="color:#f07028">www.</span>ideastatica<span style="color:#f07028"> .com</span></div>
<div class="a" style="left:1286px;top:158px;width:6px;height:962px;background:#cecece;border-left:1px solid #bdbdbd;border-right:1px solid #bdbdbd"></div>
<div class="a" style="left:461px;top:68px;width:37px;height:70px;background:#dcdcdc"></div>
<div class="a" style="left:845px;top:68px;width:47px;height:70px;background:#dcdcdc"></div>
<div class="a" style="left:1204px;top:69px;width:32px;height:68px;background:#dcdcdc"></div>
<div class="a" style="left:1404px;top:68px;width:98px;height:20px;background:#dcdcdc"></div>
<div class="a" style="left:1524px;top:92px;width:33px;height:22px;background:#dcdcdc"></div>
<div class="a" style="left:2px;top:67px;width:59px;height:30px;background:#f07028"></div>
<div class="t" style="left:8px;top:75.5px;font-size:12.5px;color:#fff">DRM1</div>
<svg class="a" style="left:49px;top:80px" width="8" height="5"><path d="M0.5 0.5L7 0.5L3.75 4z" fill="#fff"/></svg>
<div class="a" style="left:141.0px;top:63px;width:1px;height:92px;background:#c8c8c8"></div>
<div class="a" style="left:260.0px;top:63px;width:1px;height:92px;background:#c8c8c8"></div>
<div class="a" style="left:417.0px;top:63px;width:1px;height:92px;background:#c8c8c8"></div>
<div class="a" style="left:588.0px;top:63px;width:1px;height:92px;background:#c8c8c8"></div>
<div class="a" style="left:673.5px;top:63px;width:1px;height:92px;background:#c8c8c8"></div>
<div class="a" style="left:782.0px;top:63px;width:1px;height:92px;background:#c8c8c8"></div>
<div class="a" style="left:1158.0px;top:63px;width:1px;height:92px;background:#c8c8c8"></div>
<div class="a" style="left:1516.0px;top:63px;width:1px;height:92px;background:#c8c8c8"></div>
<div class="a" style="left:1589.5px;top:63px;width:1px;height:92px;background:#c8c8c8"></div>
<svg class="a" style="left:0;top:0" width="1915" height="160"><path d="M91.3 84.5V100.2H69.4V81.9L77.8 74.3H81.4" stroke="#1a1a1a" stroke-width="1.55" fill="none" stroke-linejoin="miter"/><path d="M77.8 74.3V81.9H69.4" stroke="#1a1a1a" stroke-width="1.55" fill="none" stroke-linejoin="miter"/><path d="M86.3 74.6H96.3M91.3 69.6V79.6" stroke="#f07028" stroke-width="1.6"/><path d="M127.7 74.1V99.7H105.4V82.1L113.8 74.1Z" stroke="#1a1a1a" stroke-width="1.55" fill="none" stroke-linejoin="miter"/><path d="M113.8 74.1V82.1H105.4" stroke="#555" stroke-width="1.55" fill="none" stroke-linejoin="miter"/><path d="M118 69.4H132.3V95.5" stroke="#f07028" stroke-width="1.6" fill="none"/><path d="M150.9 74.6H168.6A12.8 12.8 0 0 1 168.6 100.2H150.9M155.5 70L150.9 74.6L155.5 79.2" stroke="#1a1a1a" stroke-width="1.55" fill="none" stroke-linejoin="miter"/><path d="M217.7 74.6H199.5A12.8 12.8 0 0 0 199.5 100.2H216.9M213.1 70L217.7 74.6L213.1 79.2" stroke="#bdbdbd" stroke-width="1.55" fill="none" stroke-linejoin="miter"/><path d="M238.6 69.2V93.4M234.2 88.8L238.6 93.4L243 88.8" stroke="#f07028" stroke-width="1.6" fill="none"/><path d="M222.4 94.5V100.2H253.7V94.5" stroke="#1a1a1a" stroke-width="1.55" fill="none" stroke-linejoin="miter"/><path d="M276.2 98.4L287.7 71.3H296.8L307.8 98.4H301.3L299.2 93.6H284.9L282.8 98.4Z" stroke="#1a1a1a" stroke-width="1.55" fill="none" stroke-linejoin="miter"/><path d="M287.4 87.7L291.9 78L296.8 87.7Z" stroke="#1a1a1a" stroke-width="1.55" fill="none" stroke-linejoin="miter"/><path d="M331.5 87.7V69.4M327.1 73.8L331.5 69.4L335.9 73.8M331.5 87.7H349.8M345.4 83.3L349.8 87.7L345.4 92.1M331.5 87.7L318.5 100.2M318.5 94L318.5 100.2H324.7" stroke="#bdbdbd" stroke-width="1.5" fill="none"/><path d="M367.4 78.3V96M398.7 78.3V96M367.4 79.3H398.7M371.8 74.9L367.4 79.3L371.8 83.7M394.3 74.9L398.7 79.3L394.3 83.7" stroke="#bdbdbd" stroke-width="1.5" fill="none"/><path d="M426 71.3H457.7V79.3H447.7V100.5H436.3V79.3H426Z" stroke="#bdbdbd" stroke-width="1.7" fill="none"/><rect x="468.4" y="69.4" width="21.3" height="31.1" rx="5" stroke="#1a1a1a" stroke-width="1.55" fill="none" stroke-linejoin="miter"/><circle cx="473" cy="73.9" r="1" fill="#1a1a1a"/><circle cx="485" cy="73.9" r="1" fill="#1a1a1a"/><circle cx="473" cy="96" r="2" fill="#1a1a1a"/><circle cx="485" cy="96" r="2" fill="#1a1a1a"/><path d="M508.3 71.5V84.8L539.8 98.1V84.8H523.7M508.3 71.5L539.8 98.1M512.5 75V84.8M517 79V84.8M521.5 82.5V84.8M527 87V84.8M531 89V84.8M535.5 91V84.8" stroke="#bdbdbd" stroke-width="1.4" fill="none"/><path d="M557.6 74.1V99.7M565.5 74.1V99.7M573.5 74.1V99.7M550 100.2H581.9M553.5 95.5L557.6 99.7L561.5 95.5L565.5 99.7L569.5 95.5L573.5 99.7L577.5 95.5" stroke="#1a1a1a" stroke-width="1.6" fill="none"/><path d="M613.7 74.3H597.2V100.2H623.5V84.5" stroke="#1a1a1a" stroke-width="1.55" fill="none" stroke-linejoin="miter"/><circle cx="609.6" cy="82.2" r="2" fill="#1a1a1a"/><path d="M597.2 99.7L605.4 91.3L609.6 95.5L617.4 87.7L623.5 92.9" stroke="#1a1a1a" stroke-width="1.6" fill="none"/><path d="M618.4 74.6H628.4M623.4 69.6V79.6" stroke="#f07028" stroke-width="1.6"/><rect x="634.4" y="74.3" width="26.2" height="25.9" stroke="#1a1a1a" stroke-width="1.55" fill="none" stroke-linejoin="miter"/><path d="M638.4 69.4H665.7V96.5" stroke="#1a1a1a" stroke-width="1.55" fill="none" stroke-linejoin="miter"/><circle cx="646.5" cy="82.2" r="2" fill="#1a1a1a"/><path d="M634.4 99.7L642.6 91.3L646.8 95.5L654.6 87.7L660.6 92.9" stroke="#1a1a1a" stroke-width="1.6" fill="none"/><path d="M715.59 81.66 L719.18 82.16 L719.18 87.44 L715.59 87.94 L714.35 90.92 L716.54 93.81 L712.81 97.54 L709.92 95.35 L706.94 96.59 L706.44 100.18 L701.16 100.18 L700.66 96.59 L697.68 95.35 L694.79 97.54 L691.06 93.81 L693.25 90.92 L692.01 87.94 L688.42 87.44 L688.42 82.16 L692.01 81.66 L693.25 78.68 L691.06 75.79 L694.79 72.06 L697.68 74.25 L700.66 73.01 L701.16 69.42 L706.44 69.42 L706.94 73.01 L709.92 74.25 L712.81 72.06 L716.54 75.79 L714.35 78.68Z" stroke="#1a1a1a" stroke-width="1.6" fill="none" stroke-linejoin="round"/><path d="M699 80L694.5 84.8L699 89.6M708.6 80L713.1 84.8L708.6 89.6M706 77.5L701.6 92" stroke="#1a1a1a" stroke-width="1.6" fill="none"/><rect x="736.3" y="69.4" width="31.3" height="31.1" stroke="#bdbdbd" stroke-width="1.4" fill="none"/><path d="M741 77.5H748M744.5 74V81M755 77.5H763M741.5 88L747.5 94M747.5 88L741.5 94M755 92H763" stroke="#f8b896" stroke-width="1.4"/><circle cx="759" cy="88" r="0.9" fill="#f8b896"/><circle cx="759" cy="96" r="0.9" fill="#f8b896"/><path d="M829 77A15.7 15.7 0 1 1 822 70.6" stroke="#1a1a1a" stroke-width="1.7" fill="none"/><path d="M826.5 80A11.2 11.2 0 1 1 820 74.5" stroke="#1a1a1a" stroke-width="1.7" fill="none"/><path d="M809.3 84L815.6 89.8L830.7 73" stroke="#f07028" stroke-width="4.4" fill="none"/><path d="M809.3 84L815.6 89.8L830.7 73" stroke="#fff" stroke-width="1.6" fill="none"/><path d="M868.3 69.2V100.7M853.2 95.5H868.3" stroke="#1a1a1a" stroke-width="1.7" fill="none"/><path d="M868.3 69.2H884.5A16.4 16.4 0 0 1 868.3 85.6" stroke="#f07028" stroke-width="1.5" fill="none"/><path d="M909 88.7H934A5.2 5.2 0 0 0 934 78.3" stroke="#333" stroke-width="1.8" fill="none"/><path d="M982.2 69.4V100.2" stroke="#bdbdbd" stroke-width="1.3"/><path d="M982.2 69.4H994.7L971.2 100.2H982.2" stroke="#f8b896" stroke-width="1.3" fill="none"/><path d="M1012.1 100.2H1043.8" stroke="#bdbdbd" stroke-width="1.5"/><path d="M1023.5 85Q1026 88 1023.5 91Q1021 94 1023.5 97L1021.5 100M1033.5 85Q1036 88 1033.5 91Q1031 94 1033.5 97L1031.5 100" stroke="#f8b896" stroke-width="1.2" fill="none"/><circle cx="1062" cy="86.6" r="2" fill="#f8b896"/><circle cx="1088" cy="86.6" r="2" fill="#f8b896"/><path d="M1062 86.6Q1075 94 1088 86.6" stroke="#f8b896" stroke-width="1.4" fill="none"/><path d="M1062 89L1059.5 95.5H1064.5Z M1088 89L1085.5 95.5H1090.5Z" stroke="#bdbdbd" stroke-width="1.2" fill="none"/><circle cx="1115.8" cy="84.9" r="3" fill="#1a1a1a"/><circle cx="1128.4" cy="84.9" r="3" fill="#1a1a1a"/><circle cx="1142" cy="84.9" r="3" fill="#1a1a1a"/><path d="M1168.6 69.4V100.2" stroke="#f07028" stroke-width="1.5"/><path d="M1168.6 100.2H1201M1168.6 100.2L1179 86.6L1201 84.5" stroke="#1a1a1a" stroke-width="1.7" fill="none"/><text x="1188" y="80" font-family="Liberation Sans" font-size="13" fill="#f07028">%</text><path d="M1204.3 100.4H1236M1204.3 100.4L1215 84.3H1236" stroke="#1a1a1a" stroke-width="1.7" fill="none"/><path d="M1241.3 100.4H1271.7" stroke="#f8b896" stroke-width="1.7"/><path d="M1241.3 69.9V100.4L1251.4 84.3H1271.7" stroke="#1a1a1a" stroke-width="1.6" fill="none"/><path d="M1276.6 100.4H1307.9" stroke="#f07028" stroke-width="1.5"/><path d="M1276.6 69.9V100.4L1286.5 86.3L1307.9 84.3" stroke="#1a1a1a" stroke-width="1.6" fill="none"/><path d="M1302.4 69.5V77.5" stroke="#f07028" stroke-width="1.6"/><circle cx="1302.4" cy="79.6" r="0.9" fill="#f07028"/><path d="M1323.2 100L1354.5 69.7M1344.5 69.7H1354.5V79.7M1323.2 90V100H1333.2" stroke="#1a1a1a" stroke-width="1.6" fill="none"/><path d="M1329.3 75.4L1348.8 94.5M1329.3 83.4V75.4H1337.3M1348.8 86.5V94.5H1340.8" stroke="#f07028" stroke-width="1.5" fill="none"/><path d="M1369.3 69.9V100.4H1400M1369.3 100.4Q1382 83 1395 83.8Q1399 84.5 1400 86" stroke="#1a1a1a" stroke-width="1.6" fill="none"/><path d="M1369.3 100.4Q1378 75 1392 74.3Q1398 74.5 1400 77" stroke="#1a1a1a" stroke-width="1.1" stroke-dasharray="2 1.6" fill="none"/><rect x="1452.5" y="111.5" width="59" height="25" fill="#e6e6e6" stroke="#c2c2c2"/><path d="M1499.5 118.5L1502.5 115L1505.5 118.5M1499.5 128.5L1502.5 132L1505.5 128.5" stroke="#999" stroke-width="1.2" fill="none"/></svg>
<div class="t" style="left:23.0px;top:104.0px;width:120px;text-align:center;font-size:12.2px;color:#111">New</div>
<div class="t" style="left:59.0px;top:104.0px;width:120px;text-align:center;font-size:12.2px;color:#111">Copy</div>
<div class="t" style="left:105.6px;top:104.0px;width:120px;text-align:center;font-size:12.2px;color:#111">Undo</div>
<div class="t" style="left:141.0px;top:104.0px;width:120px;text-align:center;font-size:12.2px;color:#c4c4c4">Redo</div>
<div class="t" style="left:178.0px;top:104.0px;width:120px;text-align:center;font-size:12.2px;color:#111">Save</div>
<div class="t" style="left:382.0px;top:104.0px;width:120px;text-align:center;font-size:12.2px;color:#c4c4c4">CSS</div>
<div class="t" style="left:419.5px;top:104.0px;width:120px;text-align:center;font-size:12.2px;color:#111">Rebars</div>
<div class="t" style="left:463.4px;top:104.0px;width:120px;text-align:center;font-size:12.2px;color:#c4c4c4">Diagram</div>
<div class="t" style="left:506.4px;top:104.0px;width:120px;text-align:center;font-size:12.2px;color:#111">Loads</div>
<div class="t" style="left:553.0px;top:104.0px;width:120px;text-align:center;font-size:12.2px;color:#111">New</div>
<div class="t" style="left:590.3px;top:104.0px;width:120px;text-align:center;font-size:12.2px;color:#111">Gallery</div>
<div class="t" style="left:643.3px;top:104.0px;width:120px;text-align:center;font-size:12.2px;color:#111">Settings</div>
<div class="t" style="left:692.8px;top:104.0px;width:120px;text-align:center;font-size:12.2px;color:#c4c4c4">Calculate</div>
<div class="t" style="left:756.0px;top:104.0px;width:120px;text-align:center;font-size:12.2px;color:#111">Summary</div>
<div class="t" style="left:808.0px;top:104.0px;width:120px;text-align:center;font-size:12.2px;color:#111">Strength</div>
<div class="t" style="left:864.0px;top:104.0px;width:120px;text-align:center;font-size:12.2px;color:#111">Anchorage</div>
<div class="t" style="left:1015.0px;top:104.0px;width:120px;text-align:center;font-size:12.2px;color:#c4c4c4">Deflection</div>
<div class="t" style="left:1069.0px;top:104.0px;width:120px;text-align:center;font-size:12.2px;color:#111">Auxiliary</div>
<div class="t" style="left:1160.5px;top:104.0px;width:120px;text-align:center;font-size:12.2px;color:#111">σc</div>
<div class="t" style="left:1196.0px;top:104.0px;width:120px;text-align:center;font-size:12.2px;color:#111">εc</div>
<div class="t" style="left:1232.0px;top:104.0px;width:120px;text-align:center;font-size:12.2px;color:#111">εpl</div>
<div class="t" style="left:1278.6px;top:104.0px;width:120px;text-align:center;font-size:12.2px;color:#111">Directions</div>
<div class="t" style="left:1325.0px;top:104.0px;width:120px;text-align:center;font-size:12.2px;color:#111">kc2</div>
<div class="t" style="left:231.7px;top:104.0px;width:120px;text-align:center;font-size:12.2px;color:#111">Member</div>
<div class="t" style="left:231.7px;top:118.5px;width:120px;text-align:center;font-size:12.2px;color:#111">names</div>
<div class="t" style="left:274.0px;top:104.0px;width:120px;text-align:center;font-size:12.2px;color:#c4c4c4">LCS</div>
<div class="t" style="left:322.7px;top:104.0px;width:120px;text-align:center;font-size:12.2px;color:#c4c4c4">Dimension</div>
<div class="t" style="left:322.7px;top:118.5px;width:120px;text-align:center;font-size:12.2px;color:#c4c4c4">lines</div>
<div class="t" style="left:922.6px;top:104.0px;width:120px;text-align:center;font-size:12.2px;color:#c4c4c4">Stress</div>
<div class="t" style="left:922.6px;top:118.5px;width:120px;text-align:center;font-size:12.2px;color:#c4c4c4">limitation</div>
<div class="t" style="left:968.0px;top:104.0px;width:120px;text-align:center;font-size:12.2px;color:#c4c4c4">Crack</div>
<div class="t" style="left:968.0px;top:118.5px;width:120px;text-align:center;font-size:12.2px;color:#c4c4c4">width</div>
<div class="t" style="left:1123.0px;top:104.0px;width:120px;text-align:center;font-size:12.2px;color:#111">σc /</div>
<div class="t" style="left:1123.0px;top:118.5px;width:120px;text-align:center;font-size:12.2px;color:#111">σc,lim</div>
<div class="t" style="left:9.0px;top:141.5px;width:120px;text-align:center;font-size:12.2px;color:#f7b48e">Project items</div>
<div class="t" style="left:141.8px;top:141.5px;width:120px;text-align:center;font-size:12.2px;color:#8c8c8c">Data</div>
<div class="t" style="left:279.5px;top:141.5px;width:120px;text-align:center;font-size:12.2px;color:#8c8c8c">Labels</div>
<div class="t" style="left:443.7px;top:141.5px;width:120px;text-align:center;font-size:12.2px;color:#8c8c8c">Draw</div>
<div class="t" style="left:572.0px;top:141.5px;width:120px;text-align:center;font-size:12.2px;color:#8c8c8c">Pictures</div>
<div class="t" style="left:668.7px;top:141.5px;width:120px;text-align:center;font-size:12.2px;color:#8c8c8c">Calculation</div>
<div class="t" style="left:911.4px;top:141.5px;width:120px;text-align:center;font-size:12.2px;color:#8c8c8c">Code-check results</div>
<div class="t" style="left:1278.6px;top:141.5px;width:120px;text-align:center;font-size:12.2px;color:#8c8c8c">Results</div>
<div class="t" style="left:1495.0px;top:141.5px;width:120px;text-align:center;font-size:12.2px;color:#8c8c8c">Palette</div>
<div class="t" style="left:1409.5px;top:72.0px;font-size:12.2px;color:#111">Label extreme</div>
<div class="t" style="left:1409.5px;top:94.5px;font-size:12.2px;color:#111">Draw mesh</div>
<div class="t" style="left:1408.0px;top:114.5px;font-size:12.2px;color:#333">Scale</div>
<div class="t" style="left:1466.0px;top:118.5px;font-size:12.2px;color:#9a9a9a">1.00</div>
<div class="t" style="left:1529.0px;top:72.0px;font-size:12.2px;color:#111">Detail</div>
<div class="t" style="left:1529.0px;top:96.0px;font-size:12.2px;color:#111">Load</div>
<div class="t" style="left:1529.0px;top:120.5px;font-size:12.2px;color:#111">Increment</div>
<div class="a" style="left:673.5px;top:61px;width:57.5px;height:78.5px;border:4.2px solid #f00;border-radius:9px"></div>
<div class="a" style="left:1200.5px;top:65px;width:39.5px;height:75px;border:4.2px solid #f00;border-radius:9px"></div>
<svg class="a" style="left:3.7px;top:202.7px" width="16.6" height="16.6"><defs><radialGradient id="gg" cx="40%" cy="35%" r="70%"><stop offset="0" stop-color="#8fe070"/><stop offset="1" stop-color="#3db02a"/></radialGradient></defs><circle cx="8.3" cy="8.3" r="7.3" fill="url(#gg)"/><path d="M4.7 8.5L7.5 11.3L12.1 5.5" stroke="#fff" stroke-width="2" fill="none"/></svg>
<div class="t" style="left:25px;top:206px;font-size:12px;font-weight:bold;color:#111">ULS:</div>
<div class="t" style="left:5px;top:222.4px;font-size:11.8px;color:#222">Concrete</div>
<div class="t" style="left:92px;top:222.4px;font-size:11.8px;color:#222">ULS</div>
<svg class="a" style="left:121.1px;top:219.1px" width="16.6" height="16.6"><defs><radialGradient id="gg" cx="40%" cy="35%" r="70%"><stop offset="0" stop-color="#8fe070"/><stop offset="1" stop-color="#3db02a"/></radialGradient></defs><circle cx="8.3" cy="8.3" r="7.3" fill="url(#gg)"/><path d="M4.7 8.5L7.5 11.3L12.1 5.5" stroke="#fff" stroke-width="2" fill="none"/></svg>
<div class="t" style="left:147.4px;top:222.4px;font-size:11.8px;color:#222">99.5%</div>
<div class="t" style="left:5px;top:243.4px;font-size:11.8px;color:#222">Reinforcement</div>
<div class="t" style="left:92px;top:243.4px;font-size:11.8px;color:#222">ULS</div>
<svg class="a" style="left:121.1px;top:240.1px" width="16.6" height="16.6"><defs><radialGradient id="gg" cx="40%" cy="35%" r="70%"><stop offset="0" stop-color="#8fe070"/><stop offset="1" stop-color="#3db02a"/></radialGradient></defs><circle cx="8.3" cy="8.3" r="7.3" fill="url(#gg)"/><path d="M4.7 8.5L7.5 11.3L12.1 5.5" stroke="#fff" stroke-width="2" fill="none"/></svg>
<div class="t" style="left:147.4px;top:243.4px;font-size:11.8px;color:#222">97.1%</div>
<div class="t" style="left:5px;top:264.5px;font-size:11.8px;color:#222">Tendons</div>
<div class="t" style="left:92px;top:264.5px;font-size:11.8px;color:#222">ULS</div>
<svg class="a" style="left:121.1px;top:261.2px" width="16.6" height="16.6"><defs><radialGradient id="gg" cx="40%" cy="35%" r="70%"><stop offset="0" stop-color="#8fe070"/><stop offset="1" stop-color="#3db02a"/></radialGradient></defs><circle cx="8.3" cy="8.3" r="7.3" fill="url(#gg)"/><path d="M4.7 8.5L7.5 11.3L12.1 5.5" stroke="#fff" stroke-width="2" fill="none"/></svg>
<div class="t" style="left:147.4px;top:264.5px;font-size:11.8px;color:#222">84.8%</div>
<div class="t" style="left:5px;top:285.5px;font-size:11.8px;color:#222">Anchorage</div>
<div class="t" style="left:92px;top:285.5px;font-size:11.8px;color:#222">ULS</div>
<svg class="a" style="left:121.1px;top:282.2px" width="16.6" height="16.6"><defs><radialGradient id="gg" cx="40%" cy="35%" r="70%"><stop offset="0" stop-color="#8fe070"/><stop offset="1" stop-color="#3db02a"/></radialGradient></defs><circle cx="8.3" cy="8.3" r="7.3" fill="url(#gg)"/><path d="M4.7 8.5L7.5 11.3L12.1 5.5" stroke="#fff" stroke-width="2" fill="none"/></svg>
<div class="t" style="left:147.4px;top:285.5px;font-size:11.8px;color:#222">99.9%</div>
<svg class="a" style="left:0;top:0" width="1286" height="200"><circle cx="1115.5" cy="169.5" r="6" fill="none" stroke="#333" stroke-width="1.4"/><path d="M1119.8 173.8L1124.5 178.5" stroke="#333" stroke-width="1.6"/><path d="M1134.5 168.5L1137.8 171.8L1141 168.5" stroke="#333" stroke-width="1.2" fill="none"/><line x1="1146.5" y1="160" x2="1146.5" y2="181" stroke="#bbb"/><rect x="1149" y="158.5" width="27" height="25" fill="#e8e8e8"/><path d="M1155.3 167.5H1166.8V178.8H1155.3Z M1155.3 167.5L1159.7 163.4H1171.2L1166.8 167.5M1171.2 163.4V174.7L1166.8 178.8" stroke="#666" stroke-width="1.1" fill="none"/><path d="M1159.7 163.4V174.7H1171.2M1159.7 174.7L1155.3 178.8" stroke="#777" stroke-width="0.9" fill="none"/><path d="M1182.1 168.9H1191.8V178.8H1182.1Z" fill="#6a6a6a"/><path d="M1182.1 168.9L1186.4 163.4H1197.9L1191.8 168.9Z" fill="#555"/><path d="M1191.8 168.9L1197.9 163.4V173.7L1191.8 178.8Z" fill="#7a7a7a"/><line x1="1203.5" y1="160" x2="1203.5" y2="181" stroke="#bbb"/><path d="M1211.5 167L1222 164.5L1227 166V171.5L1216.5 176L1211.5 174Z M1211.5 167L1216.5 169L1227 166M1216.5 169V176M1214.5 166.8L1221 165.2L1224 166.3L1217.5 168" stroke="#666" stroke-width="1" fill="none"/><path d="M1238.5 171.5L1245.3 164.8L1252.2 171.5M1240.5 169.8V177.8H1250.2V169.8M1243.5 177.8V172.5H1247V177.8" stroke="#b0b0b0" stroke-width="1.2" fill="none"/><path d="M1264.5 163.5L1268.5 167.5M1264.5 163.5V167M1264.5 163.5H1268M1279.5 163.5L1275.5 167.5M1279.5 163.5V167M1279.5 163.5H1276M1264.5 178.5L1268.5 174.5M1264.5 178.5V175M1264.5 178.5H1268M1279.5 178.5L1275.5 174.5M1279.5 178.5V175M1279.5 178.5H1276" stroke="#222" stroke-width="1.3" fill="none"/></svg>
<svg class="a" style="left:1123px;top:292px" width="8" height="8"><path d="M7 1V7H1Z" fill="#333"/></svg>
<div class="a" style="left:1138px;top:286px;width:129px;height:21px;background:#f07028"></div>
<div class="t" style="left:1143px;top:290px;font-size:11.8px;font-weight:bold;color:#fff">ULS Combinations</div>
<div class="t" style="left:1142.5px;top:311.5px;font-size:11.8px;color:#333">ULS</div>
<svg class="a" style="left:0;top:0" width="1286" height="1120"><clipPath id="bclip"><path d="M0 557.7 L1152.4 580.0 L1152.4 769.5 L0 769.5 Z"/></clipPath><g clip-path="url(#bclip)"><rect x="-5" y="550" width="1170" height="230" fill="#ffa500"/><path d="M-5.0 734.0 C4.2 734.2 32.5 734.5 50.0 735.0 C67.5 735.5 75.0 736.2 100.0 737.0 C125.0 737.8 166.7 739.5 200.0 740.0 C233.3 740.5 270.0 741.0 300.0 740.0 C330.0 739.0 361.5 736.0 380.0 734.0 C398.5 732.0 402.3 732.2 411.0 728.0 C419.7 723.8 425.7 714.7 432.0 709.0 C438.3 703.3 438.2 696.2 449.0 694.0 C459.8 691.8 485.8 693.2 497.0 696.0 C508.2 698.8 507.7 705.7 516.0 711.0 C524.3 716.3 534.8 724.8 547.0 728.0 C559.2 731.2 564.7 729.8 589.0 730.0 C613.3 730.2 661.2 729.4 693.0 729.0 C724.8 728.6 755.6 728.5 780.0 727.6 C804.4 726.7 823.0 723.7 839.5 723.7 C856.0 723.7 870.4 725.3 879.0 727.6 C887.6 729.9 887.7 731.6 891.0 737.5 C894.3 743.4 890.8 761.2 899.0 763.0 C907.2 764.8 928.4 751.2 940.0 748.0 C951.6 744.8 958.8 743.9 968.5 743.5 C978.2 743.1 989.8 742.9 998.0 745.5 C1006.2 748.1 1004.7 756.1 1018.0 759.0 C1031.3 761.9 1063.9 761.8 1077.6 763.0 C1091.3 764.2 1086.8 765.5 1100.0 766.0 C1113.2 766.5 1147.5 766.0 1157.0 766.0 L1157.4 766.0 L1157.4 550 L-5 550 L-5 734.0 Z" stroke="rgba(255,255,255,0.28)" stroke-width="1" fill="#ffbe00"/><path d="M-5.0 694.0 C4.2 695.0 32.5 698.2 50.0 700.0 C67.5 701.8 83.3 703.7 100.0 705.0 C116.7 706.3 125.0 707.3 150.0 708.0 C175.0 708.7 225.0 709.0 250.0 709.0 C275.0 709.0 283.3 708.5 300.0 708.0 C316.7 707.5 336.7 708.0 350.0 706.0 C363.3 704.0 364.5 698.7 380.0 696.0 C395.5 693.3 427.5 688.5 443.0 690.0 C458.5 691.5 460.8 704.3 473.0 705.0 C485.2 705.7 500.2 694.8 516.0 694.0 C531.8 693.2 552.3 698.2 568.0 700.0 C583.7 701.8 592.7 705.0 610.0 705.0 C627.3 705.0 643.7 701.8 672.0 700.0 C700.3 698.2 754.8 694.0 780.0 694.0 C805.2 694.0 805.5 697.5 823.0 700.0 C840.5 702.5 867.7 705.3 885.0 709.0 C902.3 712.7 913.0 719.2 927.0 722.0 C941.0 724.8 953.8 724.1 969.0 726.0 C984.2 727.9 1008.2 730.4 1018.0 733.6 C1027.8 736.9 1021.3 742.3 1028.0 745.5 C1034.7 748.7 1043.2 751.4 1058.0 753.0 C1072.8 754.6 1100.5 754.3 1117.0 755.0 C1133.5 755.7 1150.3 756.7 1157.0 757.0 L1157.4 757.0 L1157.4 550 L-5 550 L-5 694.0 Z" stroke="rgba(255,255,255,0.28)" stroke-width="1" fill="#ffd700"/><path d="M-5.0 686.0 C0.0 685.8 14.2 686.0 25.0 685.0 C35.8 684.0 47.5 681.7 60.0 680.0 C72.5 678.3 85.0 676.7 100.0 675.0 C115.0 673.3 130.0 671.3 150.0 670.0 C170.0 668.7 198.3 667.3 220.0 667.0 C241.7 666.7 261.7 667.2 280.0 668.0 C298.3 668.8 313.3 671.2 330.0 672.0 C346.7 672.8 364.7 671.8 380.0 673.0 C395.3 674.2 411.2 676.2 422.0 679.0 C432.8 681.8 436.5 686.5 445.0 690.0 C453.5 693.5 461.2 701.0 473.0 700.0 C484.8 699.0 500.2 685.7 516.0 684.0 C531.8 682.3 548.8 691.8 568.0 690.0 C587.2 688.2 610.2 676.5 631.0 673.0 C651.8 669.5 668.2 670.0 693.0 669.0 C717.8 668.0 758.3 666.0 780.0 667.0 C801.7 668.0 805.5 672.2 823.0 675.0 C840.5 677.8 867.7 680.5 885.0 684.0 C902.3 687.5 911.5 692.3 927.0 696.0 C942.5 699.7 962.8 702.7 978.0 706.0 C993.2 709.3 1004.7 712.3 1018.0 716.0 C1031.3 719.7 1045.3 723.5 1058.0 728.0 C1070.7 732.5 1083.2 739.5 1094.0 743.0 C1104.8 746.5 1112.5 747.5 1123.0 749.0 C1133.5 750.5 1151.3 751.5 1157.0 752.0 L1157.4 752.0 L1157.4 550 L-5 550 L-5 686.0 Z" stroke="rgba(255,255,255,0.28)" stroke-width="1" fill="#fff000"/><path d="M-5.0 668.0 C2.5 668.0 26.7 668.2 40.0 668.0 C53.3 667.8 68.3 670.0 75.0 667.0 C81.7 664.0 75.8 654.5 80.0 650.0 C84.2 645.5 88.3 644.0 100.0 640.0 C111.7 636.0 133.3 629.2 150.0 626.0 C166.7 622.8 181.7 621.8 200.0 621.0 C218.3 620.2 243.3 620.3 260.0 621.0 C276.7 621.7 287.7 622.8 300.0 625.0 C312.3 627.2 320.7 629.2 334.0 634.0 C347.3 638.8 368.8 649.5 380.0 654.0 C391.2 658.5 394.0 658.5 401.0 661.0 C408.0 663.5 415.5 667.2 422.0 669.0 C428.5 670.8 437.7 676.8 440.0 672.0 C442.3 667.2 438.0 648.3 436.0 640.0 C434.0 631.7 429.0 627.8 428.0 622.0 C427.0 616.2 427.5 609.2 430.0 605.0 C432.5 600.8 431.3 597.3 443.0 597.0 C454.7 596.7 482.7 600.3 500.0 603.0 C517.3 605.7 534.0 609.0 547.0 613.0 C560.0 617.0 569.2 623.2 578.0 627.0 C586.8 630.8 588.0 634.5 600.0 636.0 C612.0 637.5 633.3 636.0 650.0 636.0 C666.7 636.0 681.7 635.3 700.0 636.0 C718.3 636.7 739.5 638.0 760.0 640.0 C780.5 642.0 805.7 644.8 823.0 648.0 C840.3 651.2 853.7 654.5 864.0 659.0 C874.3 663.5 874.5 670.5 885.0 675.0 C895.5 679.5 914.0 681.0 927.0 686.0 C940.0 691.0 950.8 703.8 963.0 705.0 C975.2 706.2 988.7 694.2 1000.0 693.0 C1011.3 691.8 1020.5 695.7 1031.0 698.0 C1041.5 700.3 1052.5 702.8 1063.0 707.0 C1073.5 711.2 1083.7 719.0 1094.0 723.0 C1104.3 727.0 1114.5 728.8 1125.0 731.0 C1135.5 733.2 1151.7 735.2 1157.0 736.0 L1157.4 736.0 L1157.4 550 L-5 550 L-5 668.0 Z" stroke="rgba(255,255,255,0.28)" stroke-width="1" fill="#c8dc00"/><path d="M-5.0 588.0 C0.0 588.0 16.7 586.3 25.0 588.0 C33.3 589.7 37.5 594.0 45.0 598.0 C52.5 602.0 64.7 607.5 70.0 612.0 C75.3 616.5 76.7 621.2 77.0 625.0 C77.3 628.8 78.2 632.5 72.0 635.0 C65.8 637.5 52.8 639.2 40.0 640.0 C27.2 640.8 2.5 648.7 -5.0 640.0 C-12.5 631.3 -5.0 596.7 -5.0 588.0 Z" fill="#fff000"/><path d="M-5.0 690.0 C-2.5 690.3 7.2 689.5 10.0 692.0 C12.8 694.5 12.3 700.7 12.0 705.0 C11.7 709.3 10.8 715.2 8.0 718.0 C5.2 720.8 -2.8 726.7 -5.0 722.0 C-7.2 717.3 -5.0 695.3 -5.0 690.0 Z" fill="#ffbe00"/><path d="M505.0 640.0 C509.2 640.8 521.2 643.0 530.0 645.0 C538.8 647.0 552.7 649.2 558.0 652.0 C563.3 654.8 563.0 658.8 562.0 662.0 C561.0 665.2 559.0 668.7 552.0 671.0 C545.0 673.3 528.7 676.5 520.0 676.0 C511.3 675.5 502.5 674.0 500.0 668.0 C497.5 662.0 504.2 644.7 505.0 640.0 Z" fill="#c8dc00"/><path d="M940.0 630.0 C941.7 628.2 946.2 621.2 950.0 619.0 C953.8 616.8 958.7 616.8 963.0 616.8 C967.3 616.8 972.3 616.8 976.0 619.0 C979.7 621.2 987.2 626.5 985.0 630.0 C982.8 633.5 970.5 640.0 963.0 640.0 C955.5 640.0 943.8 631.7 940.0 630.0 Z" fill="#fff000"/><path d="M935.0 700.0 C937.5 701.7 945.3 707.3 950.0 710.0 C954.7 712.7 958.3 715.7 963.0 716.0 C967.7 716.3 973.5 714.3 978.0 712.0 C982.5 709.7 992.5 704.8 990.0 702.0 C987.5 699.2 972.2 695.3 963.0 695.0 C953.8 694.7 939.7 699.2 935.0 700.0 Z" fill="#ffbe00"/><path d="M451.0 686.0 C451.8 688.2 453.7 695.5 456.0 699.0 C458.3 702.5 461.7 705.3 465.0 707.0 C468.3 708.7 472.5 709.7 476.0 709.0 C479.5 708.3 483.2 706.5 486.0 703.0 C488.8 699.5 495.2 689.7 493.0 688.0 C490.8 686.3 480.0 693.3 473.0 693.0 C466.0 692.7 454.7 687.2 451.0 686.0 Z" fill="#ff8000"/><path d="M458.0 689.0 C459.2 690.3 462.3 695.2 465.0 697.0 C467.7 698.8 471.0 700.0 474.0 700.0 C477.0 700.0 480.5 698.8 483.0 697.0 C485.5 695.2 490.7 689.7 489.0 689.0 C487.3 688.3 478.2 693.0 473.0 693.0 C467.8 693.0 460.5 689.7 458.0 689.0 Z" fill="#ff5000"/><path d="M780.0 763.0 C790.9 760.7 829.7 752.0 845.5 749.4 C861.3 746.8 870.8 745.2 875.0 747.5 C879.2 749.8 871.7 758.9 871.0 763.0 C870.3 767.1 886.2 770.5 871.0 772.0 C855.8 773.5 795.2 773.5 780.0 772.0 C764.8 770.5 780.0 764.5 780.0 763.0 Z" fill="#ff8000"/><path d="M740.0 772.0 C743.3 771.0 753.3 767.5 760.0 766.0 C766.7 764.5 776.7 762.0 780.0 763.0 C783.3 764.0 786.7 770.5 780.0 772.0 C773.3 773.5 746.7 772.0 740.0 772.0 Z" fill="#ff8000"/><path d="M1090.0 772.0 C1091.2 770.8 1091.5 767.5 1097.0 765.0 C1102.5 762.5 1118.0 759.9 1123.0 757.0 C1128.0 754.1 1124.2 749.0 1127.0 747.5 C1129.8 746.0 1137.0 745.1 1140.0 748.0 C1143.0 750.9 1143.3 761.0 1145.0 765.0 C1146.7 769.0 1159.2 770.8 1150.0 772.0 C1140.8 773.2 1100.0 772.0 1090.0 772.0 Z" fill="#ff8000"/><path d="M1123.0 750.0 C1124.5 749.7 1129.8 746.3 1132.0 748.0 C1134.2 749.7 1136.3 756.7 1136.0 760.0 C1135.7 763.3 1132.2 767.0 1130.0 768.0 C1127.8 769.0 1124.2 769.0 1123.0 766.0 C1121.8 763.0 1123.0 752.7 1123.0 750.0 Z" fill="#ff5000"/><line x1="1.0" y1="561.7" x2="1.0" y2="767" stroke="#b3392c" stroke-width="1.35"/><line x1="26.1" y1="562.2" x2="26.1" y2="767" stroke="#b3392c" stroke-width="1.35"/><line x1="51.3" y1="562.7" x2="51.3" y2="767" stroke="#b3392c" stroke-width="1.35"/><line x1="76.4" y1="563.2" x2="76.4" y2="767" stroke="#b3392c" stroke-width="1.35"/><line x1="101.5" y1="563.7" x2="101.5" y2="767" stroke="#b3392c" stroke-width="1.35"/><line x1="126.6" y1="564.2" x2="126.6" y2="767" stroke="#b3392c" stroke-width="1.35"/><line x1="151.8" y1="564.6" x2="151.8" y2="767" stroke="#b3392c" stroke-width="1.35"/><line x1="176.9" y1="565.1" x2="176.9" y2="767" stroke="#b3392c" stroke-width="1.35"/><line x1="202.0" y1="565.6" x2="202.0" y2="767" stroke="#b3392c" stroke-width="1.35"/><line x1="227.2" y1="566.1" x2="227.2" y2="767" stroke="#b3392c" stroke-width="1.35"/><line x1="252.3" y1="566.6" x2="252.3" y2="767" stroke="#b3392c" stroke-width="1.35"/><line x1="277.4" y1="567.1" x2="277.4" y2="767" stroke="#b3392c" stroke-width="1.35"/><line x1="302.6" y1="567.6" x2="302.6" y2="767" stroke="#b3392c" stroke-width="1.35"/><line x1="327.7" y1="568.0" x2="327.7" y2="767" stroke="#b3392c" stroke-width="1.35"/><line x1="352.8" y1="568.5" x2="352.8" y2="767" stroke="#b3392c" stroke-width="1.35"/><line x1="377.9" y1="569.0" x2="377.9" y2="767" stroke="#b3392c" stroke-width="1.35"/><line x1="403.1" y1="569.5" x2="403.1" y2="767" stroke="#b3392c" stroke-width="1.35"/><line x1="428.2" y1="570.0" x2="428.2" y2="767" stroke="#b3392c" stroke-width="1.35"/><line x1="453.3" y1="570.5" x2="453.3" y2="767" stroke="#b3392c" stroke-width="1.35"/><line x1="478.5" y1="571.0" x2="478.5" y2="767" stroke="#b3392c" stroke-width="1.35"/><line x1="503.6" y1="571.4" x2="503.6" y2="767" stroke="#b3392c" stroke-width="1.35"/><line x1="528.7" y1="571.9" x2="528.7" y2="767" stroke="#b3392c" stroke-width="1.35"/><line x1="553.9" y1="572.4" x2="553.9" y2="767" stroke="#b3392c" stroke-width="1.35"/><line x1="579.0" y1="572.9" x2="579.0" y2="767" stroke="#b3392c" stroke-width="1.35"/><line x1="604.1" y1="573.4" x2="604.1" y2="767" stroke="#b3392c" stroke-width="1.35"/><line x1="629.2" y1="573.9" x2="629.2" y2="767" stroke="#b3392c" stroke-width="1.35"/><line x1="654.4" y1="574.4" x2="654.4" y2="767" stroke="#b3392c" stroke-width="1.35"/><line x1="679.5" y1="574.8" x2="679.5" y2="767" stroke="#b3392c" stroke-width="1.35"/><line x1="704.6" y1="575.3" x2="704.6" y2="767" stroke="#b3392c" stroke-width="1.35"/><line x1="729.8" y1="575.8" x2="729.8" y2="767" stroke="#b3392c" stroke-width="1.35"/><line x1="754.9" y1="576.3" x2="754.9" y2="767" stroke="#b3392c" stroke-width="1.35"/><line x1="780.0" y1="576.8" x2="780.0" y2="767" stroke="#b3392c" stroke-width="1.35"/><line x1="805.2" y1="577.3" x2="805.2" y2="767" stroke="#b3392c" stroke-width="1.35"/><line x1="830.3" y1="577.8" x2="830.3" y2="767" stroke="#b3392c" stroke-width="1.35"/><line x1="855.4" y1="578.3" x2="855.4" y2="767" stroke="#b3392c" stroke-width="1.35"/><line x1="867.9" y1="578.5" x2="867.9" y2="767" stroke="#b3392c" stroke-width="1.35"/><line x1="880.5" y1="578.7" x2="880.5" y2="767" stroke="#b3392c" stroke-width="1.35"/><line x1="893.0" y1="579.0" x2="893.0" y2="767" stroke="#b3392c" stroke-width="1.35"/><line x1="905.5" y1="579.2" x2="905.5" y2="767" stroke="#b3392c" stroke-width="1.35"/><line x1="918.0" y1="579.5" x2="918.0" y2="767" stroke="#b3392c" stroke-width="1.35"/><line x1="930.6" y1="579.7" x2="930.6" y2="767" stroke="#b3392c" stroke-width="1.35"/><line x1="943.1" y1="579.9" x2="943.1" y2="767" stroke="#b3392c" stroke-width="1.35"/><line x1="955.6" y1="580.2" x2="955.6" y2="767" stroke="#b3392c" stroke-width="1.35"/><line x1="968.2" y1="580.4" x2="968.2" y2="767" stroke="#b3392c" stroke-width="1.35"/><line x1="980.7" y1="580.7" x2="980.7" y2="767" stroke="#b3392c" stroke-width="1.35"/><line x1="993.2" y1="580.9" x2="993.2" y2="767" stroke="#b3392c" stroke-width="1.35"/><line x1="1005.8" y1="581.2" x2="1005.8" y2="767" stroke="#b3392c" stroke-width="1.35"/><line x1="1018.3" y1="581.4" x2="1018.3" y2="767" stroke="#b3392c" stroke-width="1.35"/><line x1="1030.8" y1="581.6" x2="1030.8" y2="767" stroke="#b3392c" stroke-width="1.35"/><line x1="1043.3" y1="581.9" x2="1043.3" y2="767" stroke="#b3392c" stroke-width="1.35"/><line x1="1055.9" y1="582.1" x2="1055.9" y2="767" stroke="#b3392c" stroke-width="1.35"/><line x1="1068.4" y1="582.4" x2="1068.4" y2="767" stroke="#b3392c" stroke-width="1.35"/><line x1="1080.9" y1="582.6" x2="1080.9" y2="767" stroke="#b3392c" stroke-width="1.35"/><line x1="1093.5" y1="582.9" x2="1093.5" y2="767" stroke="#b3392c" stroke-width="1.35"/><line x1="1106.0" y1="583.1" x2="1106.0" y2="767" stroke="#b3392c" stroke-width="1.35"/><line x1="1118.5" y1="583.3" x2="1118.5" y2="767" stroke="#b3392c" stroke-width="1.35"/><line x1="1131.1" y1="583.6" x2="1131.1" y2="767" stroke="#b3392c" stroke-width="1.35"/><line x1="1143.6" y1="583.8" x2="1143.6" y2="767" stroke="#b3392c" stroke-width="1.35"/><line x1="0" y1="616" x2="1152.4" y2="616" stroke="#b3392c" stroke-width="1.35"/><line x1="0" y1="635" x2="1152.4" y2="635" stroke="#b3392c" stroke-width="1.35"/><line x1="0" y1="654" x2="1152.4" y2="654" stroke="#b3392c" stroke-width="1.35"/><line x1="0" y1="673" x2="1152.4" y2="673" stroke="#b3392c" stroke-width="1.35"/><line x1="0" y1="692" x2="1152.4" y2="692" stroke="#b3392c" stroke-width="1.35"/><line x1="0" y1="710.7" x2="1152.4" y2="710.7" stroke="#b3392c" stroke-width="1.35"/><line x1="0" y1="729.5" x2="1152.4" y2="729.5" stroke="#b3392c" stroke-width="1.35"/><line x1="0" y1="741.4" x2="1124" y2="741.4" stroke="#b3392c" stroke-width="1.35"/><line x1="0" y1="763.3" x2="1146" y2="763.3" stroke="#b3392c" stroke-width="1.35"/><line x1="0" y1="598" x2="398" y2="598" stroke="#b3392c" stroke-width="1.5"/><line x1="0" y1="563" x2="1124" y2="585.3" stroke="#b3392c" stroke-width="2.2"/><line x1="1124" y1="585.4" x2="1152" y2="585.9" stroke="#b3392c" stroke-width="1.3"/><line x1="0" y1="575.7" x2="1124" y2="597.6" stroke="#b3392c" stroke-width="2.2"/><line x1="0" y1="581.8" x2="1152" y2="604.3" stroke="#b3392c" stroke-width="1.6"/><line x1="-59.1" y1="574.0" x2="-59.1" y2="723.6" stroke="#b3392c" stroke-width="1.3"/><line x1="25.1" y1="574.0" x2="25.1" y2="723.6" stroke="#b3392c" stroke-width="1.3"/><line x1="-92.5" y1="607.3" x2="58.7" y2="607.3" stroke="#b3392c" stroke-width="1.3"/><line x1="-92.5" y1="690.9" x2="58.7" y2="690.9" stroke="#b3392c" stroke-width="1.3"/><line x1="-91.5" y1="664.0" x2="-1.7" y2="575.4" stroke="#b3392c" stroke-width="1.3"/><line x1="-32.0" y1="575.4" x2="56.7" y2="664.0" stroke="#b3392c" stroke-width="1.3"/><line x1="-32.0" y1="722.6" x2="56.7" y2="633.8" stroke="#b3392c" stroke-width="1.3"/><line x1="-91.5" y1="633.8" x2="-3.8" y2="722.6" stroke="#b3392c" stroke-width="1.3"/><line x1="431.2" y1="581.0" x2="431.2" y2="730.6" stroke="#b3392c" stroke-width="1.3"/><line x1="515.4" y1="581.0" x2="515.4" y2="730.6" stroke="#b3392c" stroke-width="1.3"/><line x1="397.8" y1="614.3" x2="549.0" y2="614.3" stroke="#b3392c" stroke-width="1.3"/><line x1="397.8" y1="697.9" x2="549.0" y2="697.9" stroke="#b3392c" stroke-width="1.3"/><line x1="398.8" y1="671.0" x2="488.6" y2="582.4" stroke="#b3392c" stroke-width="1.3"/><line x1="458.3" y1="582.4" x2="547.0" y2="671.0" stroke="#b3392c" stroke-width="1.3"/><line x1="458.3" y1="729.6" x2="547.0" y2="640.8" stroke="#b3392c" stroke-width="1.3"/><line x1="398.8" y1="640.8" x2="486.5" y2="729.6" stroke="#b3392c" stroke-width="1.3"/><line x1="921.2" y1="587.4" x2="921.2" y2="737.0" stroke="#b3392c" stroke-width="1.3"/><line x1="915.2" y1="587.4" x2="915.2" y2="737.0" stroke="#b3392c" stroke-width="1.3"/><line x1="1005.4" y1="587.4" x2="1005.4" y2="737.0" stroke="#b3392c" stroke-width="1.3"/><line x1="1011.4" y1="587.4" x2="1011.4" y2="737.0" stroke="#b3392c" stroke-width="1.3"/><line x1="887.8" y1="620.7" x2="1039.0" y2="620.7" stroke="#b3392c" stroke-width="1.3"/><line x1="887.8" y1="614.7" x2="1039.0" y2="614.7" stroke="#b3392c" stroke-width="1.3"/><line x1="887.8" y1="704.3" x2="1039.0" y2="704.3" stroke="#b3392c" stroke-width="1.3"/><line x1="887.8" y1="710.3" x2="1039.0" y2="710.3" stroke="#b3392c" stroke-width="1.3"/><line x1="888.8" y1="677.4" x2="978.6" y2="588.8" stroke="#b3392c" stroke-width="1.3"/><line x1="884.4" y1="673.0" x2="974.2" y2="584.4" stroke="#b3392c" stroke-width="1.3"/><line x1="948.3" y1="588.8" x2="1037.0" y2="677.4" stroke="#b3392c" stroke-width="1.3"/><line x1="952.7" y1="584.4" x2="1041.4" y2="673.0" stroke="#b3392c" stroke-width="1.3"/><line x1="948.3" y1="736.0" x2="1037.0" y2="647.2" stroke="#b3392c" stroke-width="1.3"/><line x1="952.7" y1="740.4" x2="1041.4" y2="651.6" stroke="#b3392c" stroke-width="1.3"/><line x1="888.8" y1="647.2" x2="976.5" y2="736.0" stroke="#b3392c" stroke-width="1.3"/><line x1="884.4" y1="651.6" x2="972.1" y2="740.4" stroke="#b3392c" stroke-width="1.3"/><line x1="1123.6" y1="739.5" x2="1123.6" y2="769" stroke="#888" stroke-width="0.8"/></g><circle cx="-17" cy="649" r="37.2" fill="#fff" stroke="#1a1a1a" stroke-width="1.2"/><circle cx="473.3" cy="656.1" r="37.2" fill="#fff" stroke="#1a1a1a" stroke-width="1.2"/><circle cx="963.3" cy="662.4" r="37.2" fill="#fff" stroke="#1a1a1a" stroke-width="1.2"/><path d="M0 557.7 L1152.4 580.0 L1152.4 769.5 L0 769.5" fill="none" stroke="#333" stroke-width="1.3"/><path d="M485.6 707L509.6 731M509.6 707L485.6 731" stroke="#000" stroke-width="3"/><rect x="72.5" y="695.5" width="29" height="25.6" fill="#c8dc00" shape-rendering="crispEdges"/><rect x="72.5" y="720.4" width="29" height="25.6" fill="#fff000" shape-rendering="crispEdges"/><rect x="72.5" y="745.3" width="29" height="25.6" fill="#ffd700" shape-rendering="crispEdges"/><rect x="72.5" y="770.2" width="29" height="25.6" fill="#ffbe00" shape-rendering="crispEdges"/><rect x="72.5" y="795.1" width="29" height="25.6" fill="#ffa500" shape-rendering="crispEdges"/><rect x="72.5" y="820.0" width="29" height="25.6" fill="#ff8000" shape-rendering="crispEdges"/><rect x="72.5" y="844.9" width="29" height="25.6" fill="#ff5000" shape-rendering="crispEdges"/><rect x="72.5" y="869.8" width="29" height="25.6" fill="#ff1e00" shape-rendering="crispEdges"/><rect x="72.5" y="894.7" width="29" height="25.6" fill="#f00000" shape-rendering="crispEdges"/><rect x="72.5" y="919.6" width="29" height="25.6" fill="#c80000" shape-rendering="crispEdges"/><rect x="72.5" y="944.5" width="29" height="25.6" fill="#a00000" shape-rendering="crispEdges"/><rect x="72.5" y="969.4" width="29" height="25" fill="#780000" shape-rendering="crispEdges"/><rect x="72.5" y="695.5" width="29" height="298.8" fill="none" stroke="#222" stroke-width="1.2"/><text x="62.5" y="700.5" text-anchor="end" font-family="Liberation Sans" font-size="11" fill="#111">0.0</text><text x="62.5" y="725.4" text-anchor="end" font-family="Liberation Sans" font-size="11" fill="#111">-2.6</text><text x="62.5" y="750.3" text-anchor="end" font-family="Liberation Sans" font-size="11" fill="#111">-5.3</text><text x="62.5" y="775.2" text-anchor="end" font-family="Liberation Sans" font-size="11" fill="#111">-7.9</text><text x="62.5" y="800.1" text-anchor="end" font-family="Liberation Sans" font-size="11" fill="#111">-10.5</text><text x="62.5" y="825.0" text-anchor="end" font-family="Liberation Sans" font-size="11" fill="#111">-13.2</text><text x="62.5" y="849.9" text-anchor="end" font-family="Liberation Sans" font-size="11" fill="#111">-15.8</text><text x="62.5" y="874.8" text-anchor="end" font-family="Liberation Sans" font-size="11" fill="#111">-18.4</text><text x="62.5" y="899.7" text-anchor="end" font-family="Liberation Sans" font-size="11" fill="#111">-21.1</text><text x="62.5" y="924.6" text-anchor="end" font-family="Liberation Sans" font-size="11" fill="#111">-23.7</text><text x="62.5" y="949.5" text-anchor="end" font-family="Liberation Sans" font-size="11" fill="#111">-26.3</text><text x="62.5" y="974.4" text-anchor="end" font-family="Liberation Sans" font-size="11" fill="#111">-29.0</text><text x="62.5" y="999.3" text-anchor="end" font-family="Liberation Sans" font-size="11" fill="#111">-31.6</text><text x="101" y="648" text-anchor="end" font-family="Liberation Sans" font-size="14" fill="#111">σc</text><text x="101" y="663.5" text-anchor="end" font-family="Liberation Sans" font-size="9" fill="#111">[MPa]</text><path d="M1137.5 771.5L1208.5 869.5H1067.5Z" fill="none" stroke="#15156a" stroke-width="2.1" stroke-linejoin="miter"/><line x1="1067.5" y1="891" x2="1208.5" y2="891" stroke="#15156a" stroke-width="2.1"/><rect x="1131" y="747" width="53" height="15" fill="#fff"/><text x="1131" y="759" font-family="Liberation Sans" font-weight="bold" font-size="11" fill="#000">-19.0 MPa</text><circle cx="1130" cy="761.3" r="3" fill="#000"/></svg>
<div class="a" style="left:412px;top:171px;width:450px;height:300px;background:#fff;border:1px solid #a0a0a0"></div>
<div class="a" style="left:413px;top:172px;width:448px;height:30px;background:#f07028"></div>
<div class="t" style="left:421px;top:180.5px;font-size:15px;color:#fff">Code and calculation settings</div>
<svg class="a" style="left:832px;top:182px" width="12" height="12"><path d="M1 1L11 11M11 1L1 11" stroke="#fff" stroke-width="1.3"/></svg>
<div class="a" style="left:839px;top:207px;width:17px;height:220px;background:#f0f0f0"></div>
<div class="a" style="left:840px;top:224px;width:15px;height:40px;background:#c6c6c6"></div>
<svg class="a" style="left:839px;top:207px" width="17" height="220"><path d="M4.5 11L8.5 7L12.5 11M4.5 210L8.5 214L12.5 210" stroke="#555" stroke-width="1.2" fill="none"/></svg>
<svg class="a" style="left:424px;top:217px" width="12" height="9"><path d="M0.5 0.5H11L5.75 8Z" fill="#f07028"/></svg>
<div class="t" style="left:452px;top:216.5px;font-size:14.3px;font-weight:bold;color:#f07028">New entities and operations</div>
<div class="t" style="left:452px;top:244.0px;font-size:12.3px;color:#111">Preferred dimensions for new entities</div>
<div class="a" style="left:737px;top:237px;width:100px;height:23px;background:#e4e4e4"></div>
<div class="t" style="left:743px;top:243.5px;font-size:12.3px;color:#111">Metric</div>
<svg class="a" style="left:824px;top:245px" width="9" height="7"><path d="M0.5 0.5H8.5L4.5 6.5Z" fill="#111"/></svg>
<svg class="a" style="left:424px;top:271px" width="12" height="9"><path d="M0.5 0.5H11L5.75 8Z" fill="#f07028"/></svg>
<div class="t" style="left:452px;top:270.5px;font-size:14.3px;font-weight:bold;color:#f07028">Analysis and checks</div>
<div class="t" style="left:452px;top:298.5px;font-size:12.3px;color:#111">Stop at limit strain/slip</div>
<div class="t" style="left:452px;top:323.5px;font-size:12.3px;color:#111">Irregular increments</div>
<div class="t" style="left:452px;top:348.5px;font-size:12.3px;color:#111">Number of increments (prestressing)</div>
<div class="t" style="left:452px;top:373.5px;font-size:12.3px;color:#111">Number of increments (permanent)</div>
<div class="t" style="left:452px;top:398.5px;font-size:12.3px;color:#111">Number of increments (variable)</div>
<div class="a" style="left:742px;top:296px;width:11px;height:11px;background:#e2e2e2;border-radius:2px"></div>
<svg class="a" style="left:740px;top:292px" width="16" height="14"><path d="M3 7.5L6.3 11L13.5 2.5" stroke="#f07028" stroke-width="2" fill="none"/></svg>
<div class="a" style="left:742px;top:321px;width:11px;height:11px;background:#e2e2e2;border-radius:2px"></div>
<div class="a" style="left:737px;top:341.5px;width:100px;height:22.5px;background:#f0f0f0"></div>
<div class="t" style="left:741px;top:348.5px;font-size:12.3px;color:#111">20</div>
<div class="a" style="left:737px;top:366.2px;width:100px;height:22.5px;background:#f0f0f0"></div>
<div class="t" style="left:741px;top:373.2px;font-size:12.3px;color:#111">20</div>
<div class="a" style="left:737px;top:391px;width:100px;height:22.5px;background:#f0f0f0"></div>
<div class="t" style="left:741px;top:398px;font-size:12.3px;color:#111">20</div>
<div class="a" style="left:413px;top:420px;width:425px;height:8px;overflow:hidden"><svg class="a" style="left:11px;top:6px" width="12" height="9"><path d="M0.5 0.5H11L5.75 8Z" fill="#f07028"/></svg><div class="t" style="left:39px;top:6px;font-size:14.3px;font-weight:bold;color:#f07028">Tension stiffening</div></div>
<div class="a" style="left:422.8px;top:440px;width:44.8px;height:25px;background:#959595"></div>
<div class="t" style="left:422.8px;top:447.5px;width:44.8px;text-align:center;font-size:12.3px;color:#fff">Expand</div>
<div class="a" style="left:472.9px;top:440px;width:49.9px;height:25px;background:#959595"></div>
<div class="t" style="left:472.9px;top:447.5px;width:49.9px;text-align:center;font-size:12.3px;color:#fff">Collapse</div>
<div class="a" style="left:627px;top:440px;width:70px;height:25px;background:#959595"></div>
<div class="t" style="left:627px;top:447.5px;width:70px;text-align:center;font-size:12.3px;color:#fff">Restore</div>
<div class="a" style="left:707px;top:440px;width:70px;height:25px;background:#959595"></div>
<div class="t" style="left:707px;top:447.5px;width:70px;text-align:center;font-size:12.3px;color:#fff">OK</div>
<div class="a" style="left:786px;top:440px;width:70px;height:25px;background:#959595"></div>
<div class="t" style="left:786px;top:447.5px;width:70px;text-align:center;font-size:12.3px;color:#fff">Cancel</div>
<div class="a" style="left:735px;top:340.5px;width:43.5px;height:77px;border:4.2px solid #f00;border-radius:8px"></div>
<div class="a" style="left:1292px;top:158px;width:623px;height:26.5px;background:#f07028"></div>
<div class="a" style="left:1297px;top:162px;width:74px;height:22.5px;background:#f0f0f0"></div>
<div class="t" style="left:1297px;top:169px;width:74px;text-align:center;font-size:11.9px;color:#f07028">Concrete</div>
<div class="t" style="left:1384.6px;top:169px;font-size:11.9px;color:#fff">Reinforcement</div>
<div class="t" style="left:1488px;top:169px;font-size:11.9px;color:#fff">Tendon</div>
<div class="t" style="left:1302px;top:196.5px;font-size:11.45px;font-weight:bold;color:#333">Extreme ULS: ULS (P70.0%)</div>
<div class="t" style="left:1302px;top:224.5px;font-size:12px;color:#222">Load increment</div>
<div class="a" style="left:1452px;top:220px;width:454px;height:21px;background:#e4e4e4"></div>
<div class="t" style="left:1458px;top:225.5px;font-size:11.8px;color:#111">P70.0%</div>
<svg class="a" style="left:1893px;top:227px" width="9" height="7"><path d="M0.5 0.5H8.5L4.5 6.5Z" fill="#111"/></svg>
<div class="a" style="left:1303px;top:251.3px;width:534.6px;height:33px;background:#f0f0f0"></div>
<div class="a" style="left:1303px;top:342.5px;width:534.6px;height:29px;background:#e3e3e3"></div>
<svg class="a" style="left:0;top:0" width="1915" height="480"><line x1="1303" y1="251.3" x2="1303" y2="459.3" stroke="#b4b4b4" stroke-width="1.3"/><line x1="1382.4" y1="251.3" x2="1382.4" y2="459.3" stroke="#b4b4b4" stroke-width="1.3"/><line x1="1432.4" y1="251.3" x2="1432.4" y2="459.3" stroke="#b4b4b4" stroke-width="1.3"/><line x1="1482.4" y1="251.3" x2="1482.4" y2="459.3" stroke="#b4b4b4" stroke-width="1.3"/><line x1="1542.3" y1="251.3" x2="1542.3" y2="459.3" stroke="#b4b4b4" stroke-width="1.3"/><line x1="1603.4" y1="251.3" x2="1603.4" y2="459.3" stroke="#b4b4b4" stroke-width="1.3"/><line x1="1668.2" y1="251.3" x2="1668.2" y2="459.3" stroke="#b4b4b4" stroke-width="1.3"/><line x1="1718.5" y1="251.3" x2="1718.5" y2="459.3" stroke="#b4b4b4" stroke-width="1.3"/><line x1="1802.5" y1="251.3" x2="1802.5" y2="459.3" stroke="#b4b4b4" stroke-width="1.3"/><line x1="1837.6" y1="251.3" x2="1837.6" y2="459.3" stroke="#b4b4b4" stroke-width="1.3"/><line x1="1303" y1="251.3" x2="1837.6" y2="251.3" stroke="#b4b4b4" stroke-width="1.3"/><line x1="1303" y1="284.3" x2="1837.6" y2="284.3" stroke="#b4b4b4" stroke-width="1.3"/><line x1="1303" y1="313.5" x2="1837.6" y2="313.5" stroke="#b4b4b4" stroke-width="1.3"/><line x1="1303" y1="342.5" x2="1837.6" y2="342.5" stroke="#b4b4b4" stroke-width="1.3"/><line x1="1303" y1="371.5" x2="1837.6" y2="371.5" stroke="#b4b4b4" stroke-width="1.3"/><line x1="1303" y1="400.6" x2="1837.6" y2="400.6" stroke="#b4b4b4" stroke-width="1.3"/><line x1="1303" y1="429.8" x2="1837.6" y2="429.8" stroke="#b4b4b4" stroke-width="1.3"/><line x1="1303" y1="459.3" x2="1837.6" y2="459.3" stroke="#b4b4b4" stroke-width="1.3"/><rect x="1302.8" y="251.3" width="534.8" height="208" fill="none" stroke="#a8a8a8" stroke-width="2"/></svg>
<div class="t" style="left:1308.5px;top:262.5px;font-size:11.6px;font-weight:bold;color:#333">Member</div>
<div class="t" style="left:1387.9px;top:262.5px;font-size:11.6px;font-weight:bold;color:#333">X [m]</div>
<div class="t" style="left:1437.9px;top:262.5px;font-size:11.6px;font-weight:bold;color:#333">Z [m]</div>
<div class="t" style="left:1487.9px;top:262.5px;font-size:11.6px;font-weight:bold;color:#333">σc [MPa]</div>
<div class="t" style="left:1547.8px;top:262.5px;font-size:11.6px;font-weight:bold;color:#333">εc [1e-4]</div>
<div class="t" style="left:1608.9px;top:262.5px;font-size:11.6px;font-weight:bold;color:#333">εpl [1e-4]</div>
<div class="t" style="left:1673.7px;top:262.5px;font-size:11.6px;font-weight:bold;color:#333">kc2 [-]</div>
<div class="t" style="left:1724.0px;top:262.5px;font-size:11.6px;font-weight:bold;color:#333">σc/σc,lim [%]</div>
<div class="t" style="left:1308.0px;top:293.9px;font-size:11.6px;color:#444">M3</div>
<div class="t" style="left:1387.4px;top:293.9px;font-size:11.6px;color:#444">22.63</div>
<div class="t" style="left:1437.4px;top:293.9px;font-size:11.6px;color:#444">-1.02</div>
<div class="t" style="left:1487.4px;top:293.9px;font-size:11.6px;color:#444"><b>-19.0</b></div>
<div class="t" style="left:1547.3px;top:293.9px;font-size:11.6px;color:#444"><b>-6.9</b></div>
<div class="t" style="left:1608.4px;top:293.9px;font-size:11.6px;color:#444"><b>-1.5</b></div>
<div class="t" style="left:1673.2px;top:293.9px;font-size:11.6px;color:#444">1.00</div>
<div class="t" style="left:1723.5px;top:293.9px;font-size:11.6px;color:#444"><b>59.8</b></div>
<svg class="a" style="left:1811.5px;top:290.4px" width="17.0" height="17.0"><defs><radialGradient id="gg" cx="40%" cy="35%" r="70%"><stop offset="0" stop-color="#8fe070"/><stop offset="1" stop-color="#3db02a"/></radialGradient></defs><circle cx="8.5" cy="8.5" r="7.5" fill="url(#gg)"/><path d="M4.9 8.7L7.7 11.5L12.3 5.7" stroke="#fff" stroke-width="2" fill="none"/></svg>
<div class="t" style="left:1308.0px;top:323.0px;font-size:11.6px;color:#444">M2</div>
<div class="t" style="left:1387.4px;top:323.0px;font-size:11.6px;color:#444">0.17</div>
<div class="t" style="left:1437.4px;top:323.0px;font-size:11.6px;color:#444">-1.02</div>
<div class="t" style="left:1487.4px;top:323.0px;font-size:11.6px;color:#444"><b>-18.1</b></div>
<div class="t" style="left:1547.3px;top:323.0px;font-size:11.6px;color:#444"><b>-6.5</b></div>
<div class="t" style="left:1608.4px;top:323.0px;font-size:11.6px;color:#444"><b>-1.3</b></div>
<div class="t" style="left:1673.2px;top:323.0px;font-size:11.6px;color:#444">1.00</div>
<div class="t" style="left:1723.5px;top:323.0px;font-size:11.6px;color:#444"><b>56.9</b></div>
<svg class="a" style="left:1811.5px;top:319.5px" width="17.0" height="17.0"><defs><radialGradient id="gg" cx="40%" cy="35%" r="70%"><stop offset="0" stop-color="#8fe070"/><stop offset="1" stop-color="#3db02a"/></radialGradient></defs><circle cx="8.5" cy="8.5" r="7.5" fill="url(#gg)"/><path d="M4.9 8.7L7.7 11.5L12.3 5.7" stroke="#fff" stroke-width="2" fill="none"/></svg>
<div class="t" style="left:1308.0px;top:352.0px;font-size:11.6px;color:#444">M1</div>
<div class="t" style="left:1387.4px;top:352.0px;font-size:11.6px;color:#444">17.36</div>
<div class="t" style="left:1437.4px;top:352.0px;font-size:11.6px;color:#444">-0.48</div>
<div class="t" style="left:1487.4px;top:352.0px;font-size:11.6px;color:#444"><b>-18.0</b></div>
<div class="t" style="left:1547.3px;top:352.0px;font-size:11.6px;color:#444"><b>-6.4</b></div>
<div class="t" style="left:1608.4px;top:352.0px;font-size:11.6px;color:#444"><b>-1.3</b></div>
<div class="t" style="left:1673.2px;top:352.0px;font-size:11.6px;color:#444">1.00</div>
<div class="t" style="left:1723.5px;top:352.0px;font-size:11.6px;color:#444"><b>56.6</b></div>
<svg class="a" style="left:1811.5px;top:348.5px" width="17.0" height="17.0"><defs><radialGradient id="gg" cx="40%" cy="35%" r="70%"><stop offset="0" stop-color="#8fe070"/><stop offset="1" stop-color="#3db02a"/></radialGradient></defs><circle cx="8.5" cy="8.5" r="7.5" fill="url(#gg)"/><path d="M4.9 8.7L7.7 11.5L12.3 5.7" stroke="#fff" stroke-width="2" fill="none"/></svg>
<div class="t" style="left:1308.0px;top:381.1px;font-size:11.6px;color:#444">M1</div>
<div class="t" style="left:1387.4px;top:381.1px;font-size:11.6px;color:#444">0.23</div>
<div class="t" style="left:1437.4px;top:381.1px;font-size:11.6px;color:#444">-0.83</div>
<div class="t" style="left:1487.4px;top:381.1px;font-size:11.6px;color:#444">-4.8</div>
<div class="t" style="left:1547.3px;top:381.1px;font-size:11.6px;color:#444">-1.4</div>
<div class="t" style="left:1608.4px;top:381.1px;font-size:11.6px;color:#444">0.0</div>
<div class="t" style="left:1673.2px;top:381.1px;font-size:11.6px;color:#444"><b>1.00</b></div>
<div class="t" style="left:1723.5px;top:381.1px;font-size:11.6px;color:#444">15.1</div>
<svg class="a" style="left:1811.5px;top:377.6px" width="17.0" height="17.0"><defs><radialGradient id="gg" cx="40%" cy="35%" r="70%"><stop offset="0" stop-color="#8fe070"/><stop offset="1" stop-color="#3db02a"/></radialGradient></defs><circle cx="8.5" cy="8.5" r="7.5" fill="url(#gg)"/><path d="M4.9 8.7L7.7 11.5L12.3 5.7" stroke="#fff" stroke-width="2" fill="none"/></svg>
<div class="t" style="left:1308.0px;top:410.2px;font-size:11.6px;color:#444">M3</div>
<div class="t" style="left:1387.4px;top:410.2px;font-size:11.6px;color:#444">22.58</div>
<div class="t" style="left:1437.4px;top:410.2px;font-size:11.6px;color:#444">-0.77</div>
<div class="t" style="left:1487.4px;top:410.2px;font-size:11.6px;color:#444">-0.7</div>
<div class="t" style="left:1547.3px;top:410.2px;font-size:11.6px;color:#444">-0.2</div>
<div class="t" style="left:1608.4px;top:410.2px;font-size:11.6px;color:#444">0.0</div>
<div class="t" style="left:1673.2px;top:410.2px;font-size:11.6px;color:#444"><b>1.00</b></div>
<div class="t" style="left:1723.5px;top:410.2px;font-size:11.6px;color:#444">2.3</div>
<svg class="a" style="left:1811.5px;top:406.7px" width="17.0" height="17.0"><defs><radialGradient id="gg" cx="40%" cy="35%" r="70%"><stop offset="0" stop-color="#8fe070"/><stop offset="1" stop-color="#3db02a"/></radialGradient></defs><circle cx="8.5" cy="8.5" r="7.5" fill="url(#gg)"/><path d="M4.9 8.7L7.7 11.5L12.3 5.7" stroke="#fff" stroke-width="2" fill="none"/></svg>
<div class="t" style="left:1308.0px;top:439.6px;font-size:11.6px;color:#444">M2</div>
<div class="t" style="left:1387.4px;top:439.6px;font-size:11.6px;color:#444">0.00</div>
<div class="t" style="left:1437.4px;top:439.6px;font-size:11.6px;color:#444">-0.77</div>
<div class="t" style="left:1487.4px;top:439.6px;font-size:11.6px;color:#444">-0.1</div>
<div class="t" style="left:1547.3px;top:439.6px;font-size:11.6px;color:#444">0.0</div>
<div class="t" style="left:1608.4px;top:439.6px;font-size:11.6px;color:#444">0.0</div>
<div class="t" style="left:1673.2px;top:439.6px;font-size:11.6px;color:#444"><b>1.00</b></div>
<div class="t" style="left:1723.5px;top:439.6px;font-size:11.6px;color:#444">0.2</div>
<svg class="a" style="left:1811.5px;top:436.1px" width="17.0" height="17.0"><defs><radialGradient id="gg" cx="40%" cy="35%" r="70%"><stop offset="0" stop-color="#8fe070"/><stop offset="1" stop-color="#3db02a"/></radialGradient></defs><circle cx="8.5" cy="8.5" r="7.5" fill="url(#gg)"/><path d="M4.9 8.7L7.7 11.5L12.3 5.7" stroke="#fff" stroke-width="2" fill="none"/></svg>
<div class="a" style="left:1304px;top:638px;width:601px;height:1px;background:#d6d6d6"></div>
<div class="a" style="left:1877.5px;top:659px;width:37.5px;height:36px;background:#8f8f8f"></div>
<div class="t" style="left:1877.5px;top:667px;width:38px;text-align:center;font-size:21px;color:#fff">X</div>
<svg class="a" style="left:0;top:0" width="1915" height="1120"><line x1="1377" y1="851" x2="1856" y2="851" stroke="#dcdcdc" stroke-width="1.6"/><line x1="1377" y1="851" x2="1387" y2="851" stroke="#9a9a9a" stroke-width="1.8"/><line x1="1377" y1="926.5" x2="1856" y2="926.5" stroke="#dcdcdc" stroke-width="1.6"/><line x1="1377" y1="926.5" x2="1387" y2="926.5" stroke="#9a9a9a" stroke-width="1.8"/><line x1="1377" y1="1002" x2="1856" y2="1002" stroke="#dcdcdc" stroke-width="1.6"/><line x1="1377" y1="1002" x2="1387" y2="1002" stroke="#9a9a9a" stroke-width="1.8"/><line x1="1377" y1="1076" x2="1856" y2="1076" stroke="#dcdcdc" stroke-width="1.6"/><line x1="1377" y1="1076" x2="1387" y2="1076" stroke="#9a9a9a" stroke-width="1.8"/><line x1="1453" y1="774" x2="1453" y2="1076" stroke="#dcdcdc" stroke-width="1.6"/><line x1="1587.6" y1="774" x2="1587.6" y2="1076" stroke="#dcdcdc" stroke-width="1.6"/><line x1="1721.5" y1="774" x2="1721.5" y2="1076" stroke="#dcdcdc" stroke-width="1.6"/><line x1="1855" y1="774" x2="1855" y2="1076" stroke="#dcdcdc" stroke-width="1.6"/><line x1="1387" y1="765" x2="1387" y2="774" stroke="#9a9a9a" stroke-width="1.8"/><line x1="1453" y1="765" x2="1453" y2="774" stroke="#9a9a9a" stroke-width="1.8"/><line x1="1587.6" y1="765" x2="1587.6" y2="774" stroke="#9a9a9a" stroke-width="1.8"/><line x1="1721.5" y1="765" x2="1721.5" y2="774" stroke="#9a9a9a" stroke-width="1.8"/><line x1="1855" y1="765" x2="1855" y2="774" stroke="#9a9a9a" stroke-width="1.8"/><line x1="1521" y1="765" x2="1521" y2="1076" stroke="#45b0e0" stroke-width="1.8"/><line x1="1654" y1="765" x2="1654" y2="1076" stroke="#45b0e0" stroke-width="1.8"/><line x1="1789" y1="765" x2="1789" y2="1076" stroke="#45b0e0" stroke-width="1.8"/><line x1="1387" y1="774" x2="1387" y2="1076" stroke="#9a9a9a" stroke-width="2"/><line x1="1377" y1="774" x2="1856" y2="774" stroke="#9a9a9a" stroke-width="2.6"/><text x="1358.5" y="784" font-family="Liberation Sans" font-size="23.5" fill="#4a4a4a" text-anchor="start" textLength="11.5" lengthAdjust="spacingAndGlyphs">0</text><text x="1351" y="861" font-family="Liberation Sans" font-size="23.5" fill="#4a4a4a" text-anchor="start" textLength="19" lengthAdjust="spacingAndGlyphs">-5</text><text x="1341" y="936.5" font-family="Liberation Sans" font-size="23.5" fill="#4a4a4a" text-anchor="start" textLength="29" lengthAdjust="spacingAndGlyphs">-10</text><text x="1341" y="1012" font-family="Liberation Sans" font-size="23.5" fill="#4a4a4a" text-anchor="start" textLength="29" lengthAdjust="spacingAndGlyphs">-15</text><text x="1341" y="1086" font-family="Liberation Sans" font-size="23.5" fill="#4a4a4a" text-anchor="start" textLength="29" lengthAdjust="spacingAndGlyphs">-20</text><text x="1479.3" y="767.3" font-family="Liberation Sans" font-size="22.5" fill="#4a4a4a" text-anchor="start" textLength="79" lengthAdjust="spacingAndGlyphs">P100.0%</text><text x="1606" y="767.3" font-family="Liberation Sans" font-size="22.5" fill="#4a4a4a" text-anchor="start" textLength="90" lengthAdjust="spacingAndGlyphs">G100.00%</text><text x="1748" y="767.3" font-family="Liberation Sans" font-size="22.5" fill="#4a4a4a" text-anchor="start" textLength="79" lengthAdjust="spacingAndGlyphs">V100.0%</text><text x="1526" y="701.8" font-family="Liberation Sans" font-size="28" fill="#4a4a4a" text-anchor="start" textLength="103" lengthAdjust="spacingAndGlyphs">σc [MPa]</text><path d="M1387 774 L1521 1019.5 C1530 1010 1555 980 1572.6 964 C1585 954 1605 944 1626 943.4 C1640 943 1648 945 1654 944.8 C1680 943 1700 941 1715 940 C1730 939 1740 938 1748 935 C1760 930 1772 926 1789 924.7" stroke="#000" stroke-width="3" fill="none" stroke-linejoin="round"/><circle cx="1479.4" cy="947.3" r="4.6" fill="#fff" stroke="#f02020" stroke-width="2"/><circle cx="1520.8" cy="1019.5" r="5.2" fill="#fff" stroke="#000" stroke-width="2"/><text x="1480" y="983.5" font-family="Liberation Sans" font-size="22.5" fill="#ff3a3a" text-anchor="start" textLength="82" lengthAdjust="spacingAndGlyphs">-11.5 MPa</text><text x="1522" y="1055.5" font-family="Liberation Sans" font-size="23" fill="#3a3a3a" text-anchor="start" textLength="86" lengthAdjust="spacingAndGlyphs">-16.2 MPa</text></svg>
<svg class="a" style="left:0;top:0" width="1915" height="1120"><rect x="1300" y="218" width="230" height="24" rx="7" fill="none" stroke="#f00" stroke-width="4"/><rect x="1338" y="725" width="542" height="367" rx="6" fill="none" stroke="#f00" stroke-width="4"/><path d="M1456 242.3 C1380 254 1300 280 1262 318 C1225 355 1215 410 1216.6 455 C1218 530 1250 610 1306.7 700 L1462 928" stroke="#0a23f5" stroke-width="4" fill="none"/><path d="M1470.5 937L1451 928L1467.6 916Z" fill="#0a23f5"/></svg>
</body></html>
